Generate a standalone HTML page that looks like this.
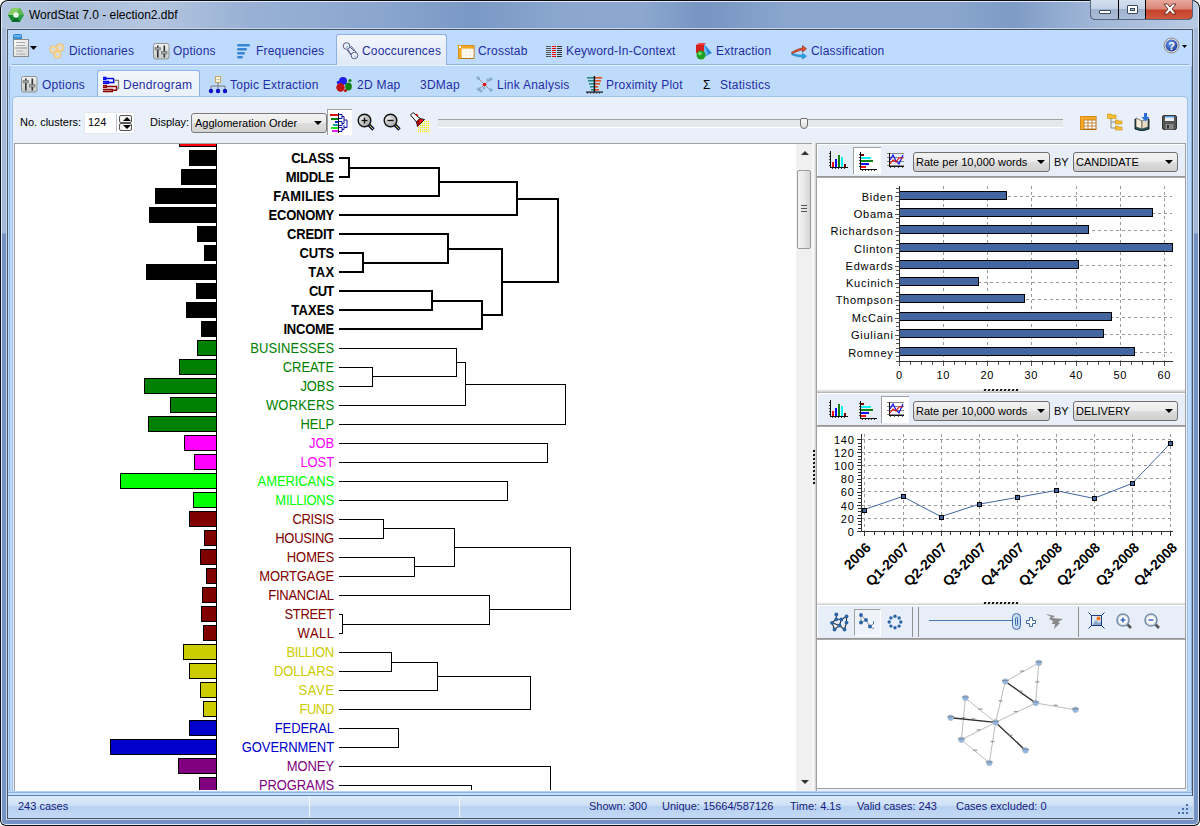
<!DOCTYPE html><html><head><meta charset="utf-8"><style>

*{margin:0;padding:0;box-sizing:border-box}
html,body{width:1200px;height:826px;overflow:hidden;background:#fff;font-family:"Liberation Sans",sans-serif;}
.ab{position:absolute}
.t{position:absolute;white-space:nowrap;line-height:1}

</style></head><body>
<div class="ab" style="left:0;top:0;width:1200px;height:826px;border-radius:8px 8px 6px 6px;background:#0a0e14;"></div>
<div class="ab" style="left:1px;top:1px;width:1198px;height:824px;border-radius:7px 7px 5px 5px;background:#dfe8f4;"></div>
<div class="ab" style="left:2px;top:2px;width:1196px;height:822px;border-radius:6px 6px 4px 4px;background:linear-gradient(180deg,#a6bbd9 0px,#a3b8d7 231px,#7492c1 232px,#7593c2 826px);"></div>
<div class="ab" style="left:2px;top:2px;width:1196px;height:26px;border-radius:6px 6px 0 0;background:linear-gradient(90deg,#b4c6df 0px,#aabedb 60px,#b4c6e0 150px,#98b0d4 250px,#8aa6cf 380px,#7a98c5 470px,#8ba7cf 560px,#8ca8d0 640px,#7794c2 700px,#8ba7cf 790px,#8aa6ce 950px,#7e9bc6 1010px,#9fb6d7 1090px,#bacbe3 1200px);"></div>
<div class="ab" style="left:6px;top:28px;width:1188px;height:792px;background:#c9d5e6;"></div>
<div class="ab" style="left:7px;top:29px;width:1186px;height:790px;background:#44546a;"></div>
<div class="ab" style="left:8px;top:30px;width:1184px;height:788px;background:#bedafc;"></div>
<div class="ab" style="left:8px;top:8px;width:16px;height:15px;"><svg width="16" height="15" viewBox="0 0 16 15"><polygon points="4,0 12,0 16,7 12,14 4,14 0,7" fill="#28a040"/><polygon points="4,0 12,0 8,7 0,7" fill="#88cc68"/><polygon points="12,0 16,7 8,7" fill="#5cb850"/><polygon points="0,7 8,7 4,14" fill="#1a8a34"/><polygon points="8,7 12,14 4,14" fill="#0c6a2a"/><circle cx="8" cy="7" r="2.8" fill="#e8f6e4"/></svg></div>
<div class="t" style="left:29px;top:9px;font-size:12px;color:#000;">WordStat 7.0 - election2.dbf</div>
<div class="ab" style="left:1090px;top:0;width:103px;height:20px;border:1px solid #56667d;border-top:none;border-radius:0 0 5px 5px;overflow:hidden;background:#000">
<div class="ab" style="left:0;top:0;width:27px;height:19px;background:linear-gradient(180deg,#d5e0ee 0%,#c3d2e6 45%,#9fb3cf 50%,#a8bcd8 100%);"></div>
<div class="ab" style="left:28px;top:0;width:26px;height:19px;background:linear-gradient(180deg,#d5e0ee 0%,#c3d2e6 45%,#9fb3cf 50%,#a8bcd8 100%);"></div>
<div class="ab" style="left:55px;top:0;width:47px;height:19px;background:linear-gradient(180deg,#e8a89c 0%,#d9877a 45%,#c4422a 55%,#d0583f 100%);"></div>
<div class="ab" style="left:8px;top:10px;width:12px;height:4px;background:#fff;border:1px solid #3c4a5e;border-radius:1px"></div>
<div class="ab" style="left:36px;top:5px;width:11px;height:9px;background:#fff;border:1px solid #3c4a5e;border-radius:1px"><div class="ab" style="left:2px;top:2px;width:5px;height:3px;background:#a4b8d4;border:1px solid #3c4a5e"></div></div>
<svg class="ab" style="left:72px;top:3px" width="14" height="12" viewBox="0 0 14 12"><path d="M1 1 H4.5 L7 4 L9.5 1 H13 L9 6 L13 11 H9.5 L7 8 L4.5 11 H1 L5 6 Z" fill="#fff" stroke="#5a2a20" stroke-width="0.9"/></svg>
</div>
<div class="ab" style="left:336px;top:34px;width:111px;height:31px;border:1px solid #8db2e3;border-bottom:none;border-radius:3px 3px 0 0;background:linear-gradient(180deg,#f2f6fc 0%,#e7eef8 60%,#dfe8f6 100%);"></div>
<div class="ab" style="left:9px;top:64px;width:1183px;height:732px;border:1px solid #8db2e3;border-radius:4px 4px 0 0;background:#bfdbfc;"></div>
<div class="ab" style="left:337px;top:64px;width:109px;height:2px;background:#e2eaf6;"></div>
<div class="ab" style="left:10px;top:65px;width:1181px;height:1px;background:#e4f0fe;"></div>
<div class="t" style="left:69px;top:45px;font-size:12px;color:#1f2ea4;font-weight:normal;letter-spacing:0.2px">Dictionaries</div>
<div class="t" style="left:173px;top:45px;font-size:12px;color:#1f2ea4;font-weight:normal;letter-spacing:0.2px">Options</div>
<div class="t" style="left:256px;top:45px;font-size:12px;color:#1f2ea4;font-weight:normal;letter-spacing:0.2px">Frequencies</div>
<div class="t" style="left:362px;top:45px;font-size:12px;color:#1f2ea4;font-weight:normal;letter-spacing:0.2px">Cooccurences</div>
<div class="t" style="left:478px;top:45px;font-size:12px;color:#1f2ea4;font-weight:normal;letter-spacing:0.2px">Crosstab</div>
<div class="t" style="left:566px;top:45px;font-size:12px;color:#1f2ea4;font-weight:normal;letter-spacing:0.2px">Keyword-In-Context</div>
<div class="t" style="left:716px;top:45px;font-size:12px;color:#1f2ea4;font-weight:normal;letter-spacing:0.2px">Extraction</div>
<div class="t" style="left:811px;top:45px;font-size:12px;color:#1f2ea4;font-weight:normal;letter-spacing:0.2px">Classification</div>
<div class="ab" style="left:97px;top:70px;width:103px;height:28px;border:1px solid #8db2e3;border-bottom:none;border-radius:3px 3px 0 0;background:linear-gradient(180deg,#f2f6fc 0%,#e9f0f9 100%);"></div>
<div class="t" style="left:42px;top:79px;font-size:12px;color:#1f2ea4;font-weight:normal;letter-spacing:0.25px">Options</div>
<div class="t" style="left:123px;top:79px;font-size:12px;color:#1f2ea4;font-weight:normal;letter-spacing:0.25px">Dendrogram</div>
<div class="t" style="left:230px;top:79px;font-size:12px;color:#1f2ea4;font-weight:normal;letter-spacing:0.25px">Topic Extraction</div>
<div class="t" style="left:357px;top:79px;font-size:12px;color:#1f2ea4;font-weight:normal;letter-spacing:0.25px">2D Map</div>
<div class="t" style="left:420px;top:79px;font-size:12px;color:#1f2ea4;font-weight:normal;letter-spacing:0.25px">3DMap</div>
<div class="t" style="left:497px;top:79px;font-size:12px;color:#1f2ea4;font-weight:normal;letter-spacing:0.25px">Link Analysis</div>
<div class="t" style="left:606px;top:79px;font-size:12px;color:#1f2ea4;font-weight:normal;letter-spacing:0.25px">Proximity Plot</div>
<div class="t" style="left:720px;top:79px;font-size:12px;color:#1f2ea4;font-weight:normal;letter-spacing:0.25px">Statistics</div>
<div class="t" style="left:703px;top:79px;font-size:12px;color:#000;font-weight:normal;">&Sigma;</div>
<div class="ab" style="left:12px;top:96px;width:1176px;height:700px;border:1px solid #9ebfe8;border-radius:4px 4px 0 0;background:#e9f0fa;"></div>
<div class="t" style="left:20px;top:117px;font-size:11px;color:#000;font-weight:normal;">No. clusters:</div>
<div class="ab" style="left:84px;top:112px;width:51px;height:22px;background:#fff;border:1px solid #e2e8f0;"></div>
<div class="t" style="left:88px;top:117px;font-size:11px;color:#000;font-weight:normal;">124</div>
<div class="ab" style="left:116px;top:114px;width:16px;height:18px;border-left:1px solid #b8c0cc;"><div class="ab" style="left:2px;top:1px;width:13px;height:8px;border:1px solid #555;border-radius:2px;background:#f4f4f4"></div><div class="ab" style="left:2px;top:9px;width:13px;height:8px;border:1px solid #555;border-radius:2px;background:#f4f4f4"></div></div>
<div class="t" style="left:150px;top:117px;font-size:11px;color:#000;font-weight:normal;">Display:</div>
<div class="ab" style="left:191px;top:113px;width:136px;height:20px;border:1px solid #7b7b7b;border-radius:3px;background:linear-gradient(180deg,#f3f3f3 0%,#ebebeb 50%,#dddddd 51%,#d3d3d3 100%);"></div>
<div class="t" style="left:195px;top:118px;font-size:11px;color:#000;font-weight:normal;">Agglomeration Order</div>
<div class="ab" style="left:314px;top:121px;width:0;height:0;border-left:4px solid transparent;border-right:4px solid transparent;border-top:4px solid #000;"></div>
<div class="ab" style="left:327px;top:109px;width:25px;height:26px;background:#fff;border-top:1px solid #a0a0a0;border-left:1px solid #a0a0a0;"></div>
<div class="ab" style="left:438px;top:119px;width:625px;height:9px;background:#e5e8ea;border-top:1px solid #a3a3a3;border-bottom:1px solid #fff;"></div>
<div class="ab" style="left:800px;top:118px;width:8px;height:11px;background:linear-gradient(180deg,#fafafa,#dcdcdc);border:1px solid #6e6e6e;border-radius:2px 2px 4px 4px;"></div>
<div class="ab" style="left:14px;top:143px;width:798px;height:648px;background:#fff;border-top:1px solid #a0a0a0;border-left:1px solid #a0a0a0;"></div>
<div class="ab" style="left:796px;top:144px;width:16px;height:647px;background:#f0f0f0;"></div>
<div class="ab" style="left:797px;top:170px;width:14px;height:79px;background:linear-gradient(90deg,#f4f4f4,#e8e8e8 50%,#d4d4d4);border:1px solid #9a9a9a;border-radius:2px;"></div>
<div class="ab" style="left:801px;top:205px;width:6px;height:1px;background:#555"></div><div class="ab" style="left:801px;top:208px;width:6px;height:1px;background:#555"></div><div class="ab" style="left:801px;top:211px;width:6px;height:1px;background:#555"></div>
<div class="ab" style="left:801px;top:151px;width:0;height:0;border-left:4px solid transparent;border-right:4px solid transparent;border-bottom:4px solid #333;"></div>
<div class="ab" style="left:801px;top:780px;width:0;height:0;border-left:4px solid transparent;border-right:4px solid transparent;border-top:4px solid #333;"></div>
<div class="ab" style="left:812px;top:143px;width:5px;height:648px;background:linear-gradient(90deg,#f4f4f4,#f8f8f8 40%,#c8c8c8 80%,#8a8a8a);"></div>
<div class="ab" style="left:813px;top:450px;width:2px;height:2px;background:#000;transform:skewY(-20deg)"></div>
<div class="ab" style="left:813px;top:454px;width:2px;height:2px;background:#000;transform:skewY(-20deg)"></div>
<div class="ab" style="left:813px;top:458px;width:2px;height:2px;background:#000;transform:skewY(-20deg)"></div>
<div class="ab" style="left:813px;top:462px;width:2px;height:2px;background:#000;transform:skewY(-20deg)"></div>
<div class="ab" style="left:813px;top:466px;width:2px;height:2px;background:#000;transform:skewY(-20deg)"></div>
<div class="ab" style="left:813px;top:470px;width:2px;height:2px;background:#000;transform:skewY(-20deg)"></div>
<div class="ab" style="left:813px;top:474px;width:2px;height:2px;background:#000;transform:skewY(-20deg)"></div>
<div class="ab" style="left:813px;top:478px;width:2px;height:2px;background:#000;transform:skewY(-20deg)"></div>
<div class="ab" style="left:813px;top:482px;width:2px;height:2px;background:#000;transform:skewY(-20deg)"></div>
<div class="ab" style="left:8px;top:791px;width:1184px;height:5px;background:linear-gradient(180deg,#b4d0f2 0px,#b4d0f2 1px,#8db4e6 1px,#8db4e6 2px,#c4e0fc 2px,#c4e0fc 4px,#5a82b8 4px);"></div>
<div class="ab" style="left:8px;top:796px;width:1185px;height:22px;background:linear-gradient(180deg,#dce9f9 0%,#d0e2f7 40%,#b7d1f1 50%,#c3d9f4 100%);"></div>
<div class="ab" style="left:309px;top:797px;width:1px;height:20px;background:#f2f7fd"></div>
<div class="ab" style="left:459px;top:797px;width:1px;height:20px;background:#f2f7fd"></div>
<div class="t" style="left:18px;top:801px;font-size:11px;color:#16207c;font-weight:normal;">243 cases</div>
<div class="t" style="left:589px;top:801px;font-size:11px;color:#16207c;font-weight:normal;">Shown: 300</div>
<div class="t" style="left:662px;top:801px;font-size:11px;color:#16207c;font-weight:normal;">Unique: 15664/587126</div>
<div class="t" style="left:790px;top:801px;font-size:11px;color:#16207c;font-weight:normal;">Time: 4.1s</div>
<div class="t" style="left:857px;top:801px;font-size:11px;color:#16207c;font-weight:normal;">Valid cases: 243</div>
<div class="t" style="left:956px;top:801px;font-size:11px;color:#16207c;font-weight:normal;">Cases excluded: 0</div>
<div class="ab" style="left:1186px;top:804px;width:2px;height:2px;background:#4a6fa8"></div>
<div class="ab" style="left:1182px;top:808px;width:2px;height:2px;background:#4a6fa8"></div>
<div class="ab" style="left:1186px;top:808px;width:2px;height:2px;background:#4a6fa8"></div>
<div class="ab" style="left:1178px;top:812px;width:2px;height:2px;background:#4a6fa8"></div>
<div class="ab" style="left:1182px;top:812px;width:2px;height:2px;background:#4a6fa8"></div>
<div class="ab" style="left:1186px;top:812px;width:2px;height:2px;background:#4a6fa8"></div>
<div class="ab" style="left:15px;top:144px;width:781px;height:646px;overflow:hidden;">
<div class="ab" style="left:164px;top:-13px;width:37px;height:16px;background:#ff0000;border:1px solid #000;border-right:none"></div>
<div class="ab" style="left:174px;top:6px;width:27px;height:16px;background:#000000;border:1px solid #000;border-right:none"></div>
<div class="t" style="right:462.00px;top:8px;font-size:13px;letter-spacing:-0.250px;font-weight:bold;color:#000000;transform:scaleY(1.1);transform-origin:50% 76%;">CLASS</div>
<div class="ab" style="left:166px;top:25px;width:35px;height:16px;background:#000000;border:1px solid #000;border-right:none"></div>
<div class="t" style="right:462.00px;top:27px;font-size:13px;letter-spacing:-0.250px;font-weight:bold;color:#000000;transform:scaleY(1.1);transform-origin:50% 76%;">MIDDLE</div>
<div class="ab" style="left:140px;top:44px;width:61px;height:16px;background:#000000;border:1px solid #000;border-right:none"></div>
<div class="t" style="right:461.61px;top:46px;font-size:13px;letter-spacing:0.136px;font-weight:bold;color:#000000;transform:scaleY(1.1);transform-origin:50% 76%;">FAMILIES</div>
<div class="ab" style="left:134px;top:63px;width:67px;height:16px;background:#000000;border:1px solid #000;border-right:none"></div>
<div class="t" style="right:462.00px;top:65px;font-size:13px;letter-spacing:-0.250px;font-weight:bold;color:#000000;transform:scaleY(1.1);transform-origin:50% 76%;">ECONOMY</div>
<div class="ab" style="left:182px;top:82px;width:19px;height:16px;background:#000000;border:1px solid #000;border-right:none"></div>
<div class="t" style="right:462.00px;top:84px;font-size:13px;letter-spacing:-0.250px;font-weight:bold;color:#000000;transform:scaleY(1.1);transform-origin:50% 76%;">CREDIT</div>
<div class="ab" style="left:189px;top:101px;width:12px;height:16px;background:#000000;border:1px solid #000;border-right:none"></div>
<div class="t" style="right:462.00px;top:103px;font-size:13px;letter-spacing:-0.250px;font-weight:bold;color:#000000;transform:scaleY(1.1);transform-origin:50% 76%;">CUTS</div>
<div class="ab" style="left:131px;top:120px;width:70px;height:16px;background:#000000;border:1px solid #000;border-right:none"></div>
<div class="t" style="right:461.20px;top:122px;font-size:13px;letter-spacing:0.550px;font-weight:bold;color:#000000;transform:scaleY(1.1);transform-origin:50% 76%;">TAX</div>
<div class="ab" style="left:181px;top:139px;width:20px;height:16px;background:#000000;border:1px solid #000;border-right:none"></div>
<div class="t" style="right:462.45px;top:141px;font-size:13px;letter-spacing:-0.700px;font-weight:bold;color:#000000;transform:scaleY(1.1);transform-origin:50% 76%;">CUT</div>
<div class="ab" style="left:171px;top:158px;width:30px;height:16px;background:#000000;border:1px solid #000;border-right:none"></div>
<div class="t" style="right:461.60px;top:160px;font-size:13px;letter-spacing:0.150px;font-weight:bold;color:#000000;transform:scaleY(1.1);transform-origin:50% 76%;">TAXES</div>
<div class="ab" style="left:186px;top:177px;width:15px;height:16px;background:#000000;border:1px solid #000;border-right:none"></div>
<div class="t" style="right:462.00px;top:179px;font-size:13px;letter-spacing:-0.250px;font-weight:bold;color:#000000;transform:scaleY(1.1);transform-origin:50% 76%;">INCOME</div>
<div class="ab" style="left:182px;top:196px;width:19px;height:16px;background:#008000;border:1px solid #000;border-right:none"></div>
<div class="t" style="right:461.82px;top:198px;font-size:13px;letter-spacing:0.078px;font-weight:normal;color:#008000;transform:scaleY(1.1);transform-origin:50% 76%;">BUSINESSES</div>
<div class="ab" style="left:164px;top:215px;width:37px;height:16px;background:#008000;border:1px solid #000;border-right:none"></div>
<div class="t" style="right:462.00px;top:217px;font-size:13px;letter-spacing:-0.100px;font-weight:normal;color:#008000;transform:scaleY(1.1);transform-origin:50% 76%;">CREATE</div>
<div class="ab" style="left:129px;top:234px;width:72px;height:16px;background:#008000;border:1px solid #000;border-right:none"></div>
<div class="t" style="right:462.00px;top:236px;font-size:13px;letter-spacing:-0.100px;font-weight:normal;color:#008000;transform:scaleY(1.1);transform-origin:50% 76%;">JOBS</div>
<div class="ab" style="left:155px;top:253px;width:46px;height:16px;background:#008000;border:1px solid #000;border-right:none"></div>
<div class="t" style="right:461.73px;top:255px;font-size:13px;letter-spacing:0.167px;font-weight:normal;color:#008000;transform:scaleY(1.1);transform-origin:50% 76%;">WORKERS</div>
<div class="ab" style="left:133px;top:272px;width:68px;height:16px;background:#008000;border:1px solid #000;border-right:none"></div>
<div class="t" style="right:462.00px;top:274px;font-size:13px;letter-spacing:-0.100px;font-weight:normal;color:#008000;transform:scaleY(1.1);transform-origin:50% 76%;">HELP</div>
<div class="ab" style="left:169px;top:291px;width:32px;height:16px;background:#ff00ff;border:1px solid #000;border-right:none"></div>
<div class="t" style="right:462.00px;top:293px;font-size:13px;letter-spacing:-0.100px;font-weight:normal;color:#ff00ff;transform:scaleY(1.1);transform-origin:50% 76%;">JOB</div>
<div class="ab" style="left:179px;top:310px;width:22px;height:16px;background:#ff00ff;border:1px solid #000;border-right:none"></div>
<div class="t" style="right:462.00px;top:312px;font-size:13px;letter-spacing:-0.100px;font-weight:normal;color:#ff00ff;transform:scaleY(1.1);transform-origin:50% 76%;">LOST</div>
<div class="ab" style="left:105px;top:329px;width:96px;height:16px;background:#00ff00;border:1px solid #000;border-right:none"></div>
<div class="t" style="right:462.00px;top:331px;font-size:13px;letter-spacing:-0.100px;font-weight:normal;color:#00ff00;transform:scaleY(1.1);transform-origin:50% 76%;">AMERICANS</div>
<div class="ab" style="left:178px;top:348px;width:23px;height:16px;background:#00ff00;border:1px solid #000;border-right:none"></div>
<div class="t" style="right:462.17px;top:350px;font-size:13px;letter-spacing:-0.271px;font-weight:normal;color:#00ff00;transform:scaleY(1.1);transform-origin:50% 76%;">MILLIONS</div>
<div class="ab" style="left:174px;top:367px;width:27px;height:16px;background:#800000;border:1px solid #000;border-right:none"></div>
<div class="t" style="right:462.24px;top:369px;font-size:13px;letter-spacing:-0.340px;font-weight:normal;color:#800000;transform:scaleY(1.1);transform-origin:50% 76%;">CRISIS</div>
<div class="ab" style="left:189px;top:386px;width:12px;height:16px;background:#800000;border:1px solid #000;border-right:none"></div>
<div class="t" style="right:462.20px;top:388px;font-size:13px;letter-spacing:-0.300px;font-weight:normal;color:#800000;transform:scaleY(1.1);transform-origin:50% 76%;">HOUSING</div>
<div class="ab" style="left:185px;top:405px;width:16px;height:16px;background:#800000;border:1px solid #000;border-right:none"></div>
<div class="t" style="right:462.00px;top:407px;font-size:13px;letter-spacing:-0.100px;font-weight:normal;color:#800000;transform:scaleY(1.1);transform-origin:50% 76%;">HOMES</div>
<div class="ab" style="left:191px;top:424px;width:10px;height:16px;background:#800000;border:1px solid #000;border-right:none"></div>
<div class="t" style="right:462.00px;top:426px;font-size:13px;letter-spacing:-0.100px;font-weight:normal;color:#800000;transform:scaleY(1.1);transform-origin:50% 76%;">MORTGAGE</div>
<div class="ab" style="left:187px;top:443px;width:14px;height:16px;background:#800000;border:1px solid #000;border-right:none"></div>
<div class="t" style="right:462.15px;top:445px;font-size:13px;letter-spacing:-0.250px;font-weight:normal;color:#800000;transform:scaleY(1.1);transform-origin:50% 76%;">FINANCIAL</div>
<div class="ab" style="left:186px;top:462px;width:15px;height:16px;background:#800000;border:1px solid #000;border-right:none"></div>
<div class="t" style="right:462.22px;top:464px;font-size:13px;letter-spacing:-0.320px;font-weight:normal;color:#800000;transform:scaleY(1.1);transform-origin:50% 76%;">STREET</div>
<div class="ab" style="left:188px;top:481px;width:13px;height:16px;background:#800000;border:1px solid #000;border-right:none"></div>
<div class="t" style="right:461.37px;top:483px;font-size:13px;letter-spacing:0.533px;font-weight:normal;color:#800000;transform:scaleY(1.1);transform-origin:50% 76%;">WALL</div>
<div class="ab" style="left:168px;top:500px;width:33px;height:16px;background:#cccc00;border:1px solid #000;border-right:none"></div>
<div class="t" style="right:462.27px;top:502px;font-size:13px;letter-spacing:-0.367px;font-weight:normal;color:#cccc00;transform:scaleY(1.1);transform-origin:50% 76%;">BILLION</div>
<div class="ab" style="left:174px;top:519px;width:27px;height:16px;background:#cccc00;border:1px solid #000;border-right:none"></div>
<div class="t" style="right:462.00px;top:521px;font-size:13px;letter-spacing:-0.100px;font-weight:normal;color:#cccc00;transform:scaleY(1.1);transform-origin:50% 76%;">DOLLARS</div>
<div class="ab" style="left:185px;top:538px;width:16px;height:16px;background:#cccc00;border:1px solid #000;border-right:none"></div>
<div class="t" style="right:461.23px;top:540px;font-size:13px;letter-spacing:0.667px;font-weight:normal;color:#cccc00;transform:scaleY(1.1);transform-origin:50% 76%;">SAVE</div>
<div class="ab" style="left:188px;top:557px;width:13px;height:16px;background:#cccc00;border:1px solid #000;border-right:none"></div>
<div class="t" style="right:462.40px;top:559px;font-size:13px;letter-spacing:-0.500px;font-weight:normal;color:#cccc00;transform:scaleY(1.1);transform-origin:50% 76%;">FUND</div>
<div class="ab" style="left:174px;top:576px;width:27px;height:16px;background:#0000cc;border:1px solid #000;border-right:none"></div>
<div class="t" style="right:462.00px;top:578px;font-size:13px;letter-spacing:-0.100px;font-weight:normal;color:#0000cc;transform:scaleY(1.1);transform-origin:50% 76%;">FEDERAL</div>
<div class="ab" style="left:95px;top:595px;width:106px;height:16px;background:#0000cc;border:1px solid #000;border-right:none"></div>
<div class="t" style="right:462.00px;top:597px;font-size:13px;letter-spacing:-0.100px;font-weight:normal;color:#0000cc;transform:scaleY(1.1);transform-origin:50% 76%;">GOVERNMENT</div>
<div class="ab" style="left:163px;top:614px;width:38px;height:16px;background:#800080;border:1px solid #000;border-right:none"></div>
<div class="t" style="right:462.00px;top:616px;font-size:13px;letter-spacing:-0.100px;font-weight:normal;color:#800080;transform:scaleY(1.1);transform-origin:50% 76%;">MONEY</div>
<div class="ab" style="left:184px;top:633px;width:17px;height:16px;background:#800080;border:1px solid #000;border-right:none"></div>
<div class="t" style="right:462.00px;top:635px;font-size:13px;letter-spacing:-0.100px;font-weight:normal;color:#800080;transform:scaleY(1.1);transform-origin:50% 76%;">PROGRAMS</div>
<div class="ab" style="left:201px;top:0;width:1px;height:646px;background:#000"></div>
<svg class="ab" style="left:0;top:0" width="781" height="646" shape-rendering="crispEdges"><rect x="324" y="223" width="34" height="1" fill="#000"/><rect x="324" y="242" width="34" height="1" fill="#000"/><rect x="357" y="223" width="1" height="20" fill="#000"/><rect x="324" y="204" width="118" height="1" fill="#000"/><rect x="357" y="232" width="85" height="1" fill="#000"/><rect x="441" y="204" width="1" height="29" fill="#000"/><rect x="441" y="218" width="10" height="1" fill="#000"/><rect x="324" y="261" width="127" height="1" fill="#000"/><rect x="450" y="218" width="1" height="44" fill="#000"/><rect x="450" y="240" width="101" height="1" fill="#000"/><rect x="324" y="280" width="227" height="1" fill="#000"/><rect x="550" y="240" width="1" height="41" fill="#000"/><rect x="324" y="299" width="209" height="1" fill="#000"/><rect x="324" y="318" width="209" height="1" fill="#000"/><rect x="532" y="299" width="1" height="20" fill="#000"/><rect x="324" y="337" width="169" height="1" fill="#000"/><rect x="324" y="356" width="169" height="1" fill="#000"/><rect x="492" y="337" width="1" height="20" fill="#000"/><rect x="324" y="375" width="45" height="1" fill="#000"/><rect x="324" y="394" width="45" height="1" fill="#000"/><rect x="368" y="375" width="1" height="20" fill="#000"/><rect x="324" y="413" width="76" height="1" fill="#000"/><rect x="324" y="432" width="76" height="1" fill="#000"/><rect x="399" y="413" width="1" height="20" fill="#000"/><rect x="368" y="384" width="72" height="1" fill="#000"/><rect x="399" y="422" width="41" height="1" fill="#000"/><rect x="439" y="384" width="1" height="39" fill="#000"/><rect x="324" y="470" width="4" height="1" fill="#000"/><rect x="324" y="489" width="4" height="1" fill="#000"/><rect x="327" y="470" width="1" height="20" fill="#000"/><rect x="324" y="451" width="151" height="1" fill="#000"/><rect x="327" y="480" width="148" height="1" fill="#000"/><rect x="474" y="451" width="1" height="30" fill="#000"/><rect x="439" y="403" width="117" height="1" fill="#000"/><rect x="474" y="465" width="82" height="1" fill="#000"/><rect x="555" y="403" width="1" height="63" fill="#000"/><rect x="324" y="508" width="53" height="1" fill="#000"/><rect x="324" y="527" width="53" height="1" fill="#000"/><rect x="376" y="508" width="1" height="20" fill="#000"/><rect x="376" y="518" width="47" height="1" fill="#000"/><rect x="324" y="546" width="99" height="1" fill="#000"/><rect x="422" y="518" width="1" height="29" fill="#000"/><rect x="422" y="532" width="94" height="1" fill="#000"/><rect x="324" y="565" width="192" height="1" fill="#000"/><rect x="515" y="532" width="1" height="34" fill="#000"/><rect x="324" y="584" width="60" height="1" fill="#000"/><rect x="324" y="603" width="60" height="1" fill="#000"/><rect x="383" y="584" width="1" height="20" fill="#000"/><rect x="324" y="622" width="212" height="1" fill="#000"/><rect x="535" y="622" width="1" height="35" fill="#000"/><rect x="324" y="641" width="133" height="1" fill="#000"/><rect x="456" y="641" width="1" height="16" fill="#000"/><rect x="324" y="13" width="11" height="2" fill="#000"/><rect x="324" y="32" width="11" height="2" fill="#000"/><rect x="333" y="13" width="2" height="21" fill="#000"/><rect x="333" y="23" width="92" height="2" fill="#000"/><rect x="324" y="51" width="101" height="2" fill="#000"/><rect x="423" y="23" width="2" height="30" fill="#000"/><rect x="423" y="37" width="80" height="2" fill="#000"/><rect x="324" y="70" width="179" height="2" fill="#000"/><rect x="501" y="37" width="2" height="35" fill="#000"/><rect x="324" y="108" width="25" height="2" fill="#000"/><rect x="324" y="127" width="25" height="2" fill="#000"/><rect x="347" y="108" width="2" height="21" fill="#000"/><rect x="324" y="89" width="110" height="2" fill="#000"/><rect x="347" y="118" width="87" height="2" fill="#000"/><rect x="432" y="89" width="2" height="31" fill="#000"/><rect x="324" y="146" width="94" height="2" fill="#000"/><rect x="324" y="165" width="94" height="2" fill="#000"/><rect x="416" y="146" width="2" height="21" fill="#000"/><rect x="416" y="156" width="52" height="2" fill="#000"/><rect x="324" y="184" width="144" height="2" fill="#000"/><rect x="466" y="156" width="2" height="30" fill="#000"/><rect x="432" y="104" width="56" height="2" fill="#000"/><rect x="466" y="170" width="22" height="2" fill="#000"/><rect x="486" y="104" width="2" height="68" fill="#000"/><rect x="501" y="54" width="43" height="2" fill="#000"/><rect x="486" y="137" width="58" height="2" fill="#000"/><rect x="542" y="54" width="2" height="85" fill="#000"/></svg>
</div>
<div class="ab" style="left:816px;top:143px;width:370px;height:646px;border:1px solid #a0a0a0;background:#fff;"></div>
<div class="ab" style="left:817px;top:144px;width:368px;height:32px;background:#e8eef8;border-top:1px solid #fff;border-left:1px solid #fff"></div>
<div class="ab" style="left:817px;top:176px;width:368px;height:2px;background:linear-gradient(180deg,#8c8c8c,#b4b4b4);"></div>
<div class="ab" style="left:817px;top:389px;width:368px;height:4px;background:linear-gradient(180deg,#fbfbfb,#e0e0e0 50%,#a8a8a8);"></div>
<div class="ab" style="left:984px;top:389px;width:2px;height:2px;background:#000;transform:skewX(-20deg)"></div>
<div class="ab" style="left:988px;top:389px;width:2px;height:2px;background:#000;transform:skewX(-20deg)"></div>
<div class="ab" style="left:992px;top:389px;width:2px;height:2px;background:#000;transform:skewX(-20deg)"></div>
<div class="ab" style="left:996px;top:389px;width:2px;height:2px;background:#000;transform:skewX(-20deg)"></div>
<div class="ab" style="left:1000px;top:389px;width:2px;height:2px;background:#000;transform:skewX(-20deg)"></div>
<div class="ab" style="left:1004px;top:389px;width:2px;height:2px;background:#000;transform:skewX(-20deg)"></div>
<div class="ab" style="left:1008px;top:389px;width:2px;height:2px;background:#000;transform:skewX(-20deg)"></div>
<div class="ab" style="left:1012px;top:389px;width:2px;height:2px;background:#000;transform:skewX(-20deg)"></div>
<div class="ab" style="left:1016px;top:389px;width:2px;height:2px;background:#000;transform:skewX(-20deg)"></div>
<div class="ab" style="left:817px;top:393px;width:368px;height:32px;background:#e8eef8;border-top:1px solid #fff;border-left:1px solid #fff"></div>
<div class="ab" style="left:817px;top:425px;width:368px;height:2px;background:linear-gradient(180deg,#8c8c8c,#b4b4b4);"></div>
<div class="ab" style="left:817px;top:602px;width:368px;height:4px;background:linear-gradient(180deg,#fbfbfb,#e0e0e0 50%,#a8a8a8);"></div>
<div class="ab" style="left:984px;top:602px;width:2px;height:2px;background:#000;transform:skewX(-20deg)"></div>
<div class="ab" style="left:988px;top:602px;width:2px;height:2px;background:#000;transform:skewX(-20deg)"></div>
<div class="ab" style="left:992px;top:602px;width:2px;height:2px;background:#000;transform:skewX(-20deg)"></div>
<div class="ab" style="left:996px;top:602px;width:2px;height:2px;background:#000;transform:skewX(-20deg)"></div>
<div class="ab" style="left:1000px;top:602px;width:2px;height:2px;background:#000;transform:skewX(-20deg)"></div>
<div class="ab" style="left:1004px;top:602px;width:2px;height:2px;background:#000;transform:skewX(-20deg)"></div>
<div class="ab" style="left:1008px;top:602px;width:2px;height:2px;background:#000;transform:skewX(-20deg)"></div>
<div class="ab" style="left:1012px;top:602px;width:2px;height:2px;background:#000;transform:skewX(-20deg)"></div>
<div class="ab" style="left:1016px;top:602px;width:2px;height:2px;background:#000;transform:skewX(-20deg)"></div>
<div class="ab" style="left:817px;top:605px;width:368px;height:33px;background:#e8eef8;border-top:1px solid #fff;border-left:1px solid #fff"></div>
<div class="ab" style="left:817px;top:638px;width:368px;height:2px;background:linear-gradient(180deg,#8c8c8c,#b4b4b4);"></div>
<div class="ab" style="left:913px;top:152px;width:137px;height:20px;border:1px solid #707070;border-radius:3px;background:linear-gradient(180deg,#f2f2f2 0%,#ebebeb 50%,#dddddd 51%,#cfcfcf 100%);"></div>
<div class="t" style="left:916px;top:157px;font-size:11px;color:#000;font-weight:normal;">Rate per 10,000 words</div>
<div class="ab" style="left:1037px;top:160px;width:0;height:0;border-left:4px solid transparent;border-right:4px solid transparent;border-top:4px solid #000;"></div>
<div class="t" style="left:1054px;top:157px;font-size:11px;color:#000;font-weight:normal;">BY</div>
<div class="ab" style="left:1073px;top:152px;width:105px;height:20px;border:1px solid #707070;border-radius:3px;background:linear-gradient(180deg,#f2f2f2 0%,#ebebeb 50%,#dddddd 51%,#cfcfcf 100%);"></div>
<div class="t" style="left:1076px;top:157px;font-size:11px;color:#000;font-weight:normal;">CANDIDATE</div>
<div class="ab" style="left:1165px;top:160px;width:0;height:0;border-left:4px solid transparent;border-right:4px solid transparent;border-top:4px solid #000;"></div>
<div class="ab" style="left:913px;top:401px;width:137px;height:20px;border:1px solid #707070;border-radius:3px;background:linear-gradient(180deg,#f2f2f2 0%,#ebebeb 50%,#dddddd 51%,#cfcfcf 100%);"></div>
<div class="t" style="left:916px;top:406px;font-size:11px;color:#000;font-weight:normal;">Rate per 10,000 words</div>
<div class="ab" style="left:1037px;top:409px;width:0;height:0;border-left:4px solid transparent;border-right:4px solid transparent;border-top:4px solid #000;"></div>
<div class="t" style="left:1054px;top:406px;font-size:11px;color:#000;font-weight:normal;">BY</div>
<div class="ab" style="left:1073px;top:401px;width:105px;height:20px;border:1px solid #707070;border-radius:3px;background:linear-gradient(180deg,#f2f2f2 0%,#ebebeb 50%,#dddddd 51%,#cfcfcf 100%);"></div>
<div class="t" style="left:1076px;top:406px;font-size:11px;color:#000;font-weight:normal;">DELIVERY</div>
<div class="ab" style="left:1165px;top:409px;width:0;height:0;border-left:4px solid transparent;border-right:4px solid transparent;border-top:4px solid #000;"></div>
<div class="ab" style="left:853px;top:147px;width:28px;height:27px;background:#fff;border-top:1px solid #a0a0a0;border-left:1px solid #a0a0a0"></div>
<div class="ab" style="left:881px;top:396px;width:28px;height:27px;background:#fff;border-top:1px solid #a0a0a0;border-left:1px solid #a0a0a0"></div>
<div class="ab" style="left:854px;top:609px;width:27px;height:27px;background:#eef3fa;border-top:1px solid #a0a0a0;border-left:1px solid #a0a0a0;border-right:1px solid #fff;border-bottom:1px solid #fff"></div>
<svg class="ab" style="left:0;top:0" width="1200" height="826" shape-rendering="crispEdges"><line x1="943.5" y1="186" x2="943.5" y2="361" stroke="#9a9a9a" stroke-width="1" stroke-dasharray="3,3"/><line x1="987.5" y1="186" x2="987.5" y2="361" stroke="#9a9a9a" stroke-width="1" stroke-dasharray="3,3"/><line x1="1031.5" y1="186" x2="1031.5" y2="361" stroke="#9a9a9a" stroke-width="1" stroke-dasharray="3,3"/><line x1="1076.5" y1="186" x2="1076.5" y2="361" stroke="#9a9a9a" stroke-width="1" stroke-dasharray="3,3"/><line x1="1120.5" y1="186" x2="1120.5" y2="361" stroke="#9a9a9a" stroke-width="1" stroke-dasharray="3,3"/><line x1="1164.5" y1="186" x2="1164.5" y2="361" stroke="#9a9a9a" stroke-width="1" stroke-dasharray="3,3"/><line x1="900" y1="196.5" x2="1172" y2="196.5" stroke="#9a9a9a" stroke-dasharray="3,3"/><line x1="900" y1="213.5" x2="1172" y2="213.5" stroke="#9a9a9a" stroke-dasharray="3,3"/><line x1="900" y1="230.5" x2="1172" y2="230.5" stroke="#9a9a9a" stroke-dasharray="3,3"/><line x1="900" y1="248.5" x2="1172" y2="248.5" stroke="#9a9a9a" stroke-dasharray="3,3"/><line x1="900" y1="265.5" x2="1172" y2="265.5" stroke="#9a9a9a" stroke-dasharray="3,3"/><line x1="900" y1="282.5" x2="1172" y2="282.5" stroke="#9a9a9a" stroke-dasharray="3,3"/><line x1="900" y1="299.5" x2="1172" y2="299.5" stroke="#9a9a9a" stroke-dasharray="3,3"/><line x1="900" y1="317.5" x2="1172" y2="317.5" stroke="#9a9a9a" stroke-dasharray="3,3"/><line x1="900" y1="334.5" x2="1172" y2="334.5" stroke="#9a9a9a" stroke-dasharray="3,3"/><line x1="900" y1="352.5" x2="1172" y2="352.5" stroke="#9a9a9a" stroke-dasharray="3,3"/><rect x="899.5" y="191.5" width="107" height="8" fill="#4466a0" stroke="#000" stroke-width="1"/><rect x="899.5" y="208.5" width="253" height="8" fill="#4466a0" stroke="#000" stroke-width="1"/><rect x="899.5" y="225.5" width="189" height="8" fill="#4466a0" stroke="#000" stroke-width="1"/><rect x="899.5" y="243.5" width="273" height="8" fill="#4466a0" stroke="#000" stroke-width="1"/><rect x="899.5" y="260.5" width="179" height="8" fill="#4466a0" stroke="#000" stroke-width="1"/><rect x="899.5" y="277.5" width="79" height="8" fill="#4466a0" stroke="#000" stroke-width="1"/><rect x="899.5" y="294.5" width="125" height="8" fill="#4466a0" stroke="#000" stroke-width="1"/><rect x="899.5" y="312.5" width="212" height="8" fill="#4466a0" stroke="#000" stroke-width="1"/><rect x="899.5" y="329.5" width="204" height="8" fill="#4466a0" stroke="#000" stroke-width="1"/><rect x="899.5" y="347.5" width="235" height="8" fill="#4466a0" stroke="#000" stroke-width="1"/><rect x="899" y="186" width="1" height="176" fill="#333"/><rect x="899" y="361" width="274" height="1" fill="#333"/><rect x="896" y="188" width="3" height="1" fill="#555"/><rect x="896" y="192" width="3" height="1" fill="#555"/><rect x="895" y="196" width="4" height="1" fill="#555"/><rect x="896" y="201" width="3" height="1" fill="#555"/><rect x="896" y="205" width="3" height="1" fill="#555"/><rect x="896" y="209" width="3" height="1" fill="#555"/><rect x="895" y="214" width="4" height="1" fill="#555"/><rect x="896" y="218" width="3" height="1" fill="#555"/><rect x="896" y="222" width="3" height="1" fill="#555"/><rect x="896" y="227" width="3" height="1" fill="#555"/><rect x="895" y="231" width="4" height="1" fill="#555"/><rect x="896" y="235" width="3" height="1" fill="#555"/><rect x="896" y="240" width="3" height="1" fill="#555"/><rect x="896" y="244" width="3" height="1" fill="#555"/><rect x="895" y="248" width="4" height="1" fill="#555"/><rect x="896" y="253" width="3" height="1" fill="#555"/><rect x="896" y="257" width="3" height="1" fill="#555"/><rect x="896" y="261" width="3" height="1" fill="#555"/><rect x="895" y="266" width="4" height="1" fill="#555"/><rect x="896" y="270" width="3" height="1" fill="#555"/><rect x="896" y="274" width="3" height="1" fill="#555"/><rect x="896" y="279" width="3" height="1" fill="#555"/><rect x="895" y="283" width="4" height="1" fill="#555"/><rect x="896" y="287" width="3" height="1" fill="#555"/><rect x="896" y="292" width="3" height="1" fill="#555"/><rect x="896" y="296" width="3" height="1" fill="#555"/><rect x="895" y="300" width="4" height="1" fill="#555"/><rect x="896" y="305" width="3" height="1" fill="#555"/><rect x="896" y="309" width="3" height="1" fill="#555"/><rect x="896" y="313" width="3" height="1" fill="#555"/><rect x="895" y="318" width="4" height="1" fill="#555"/><rect x="896" y="322" width="3" height="1" fill="#555"/><rect x="896" y="326" width="3" height="1" fill="#555"/><rect x="896" y="330" width="3" height="1" fill="#555"/><rect x="895" y="335" width="4" height="1" fill="#555"/><rect x="896" y="339" width="3" height="1" fill="#555"/><rect x="896" y="343" width="3" height="1" fill="#555"/><rect x="896" y="348" width="3" height="1" fill="#555"/><rect x="895" y="352" width="4" height="1" fill="#555"/><rect x="896" y="356" width="3" height="1" fill="#555"/><rect x="896" y="361" width="3" height="1" fill="#555"/><rect x="899" y="362" width="1" height="4" fill="#555"/><rect x="910" y="362" width="1" height="3" fill="#555"/><rect x="921" y="362" width="1" height="3" fill="#555"/><rect x="932" y="362" width="1" height="3" fill="#555"/><rect x="943" y="362" width="1" height="4" fill="#555"/><rect x="954" y="362" width="1" height="3" fill="#555"/><rect x="965" y="362" width="1" height="3" fill="#555"/><rect x="976" y="362" width="1" height="3" fill="#555"/><rect x="987" y="362" width="1" height="4" fill="#555"/><rect x="998" y="362" width="1" height="3" fill="#555"/><rect x="1009" y="362" width="1" height="3" fill="#555"/><rect x="1020" y="362" width="1" height="3" fill="#555"/><rect x="1031" y="362" width="1" height="4" fill="#555"/><rect x="1042" y="362" width="1" height="3" fill="#555"/><rect x="1054" y="362" width="1" height="3" fill="#555"/><rect x="1065" y="362" width="1" height="3" fill="#555"/><rect x="1076" y="362" width="1" height="4" fill="#555"/><rect x="1087" y="362" width="1" height="3" fill="#555"/><rect x="1098" y="362" width="1" height="3" fill="#555"/><rect x="1109" y="362" width="1" height="3" fill="#555"/><rect x="1120" y="362" width="1" height="4" fill="#555"/><rect x="1131" y="362" width="1" height="3" fill="#555"/><rect x="1142" y="362" width="1" height="3" fill="#555"/><rect x="1153" y="362" width="1" height="3" fill="#555"/><rect x="1164" y="362" width="1" height="4" fill="#555"/></svg>
<div class="t" style="right:306.4px;top:192px;font-size:11px;letter-spacing:0.75px;color:#000;">Biden</div>
<div class="t" style="right:306.4px;top:209px;font-size:11px;letter-spacing:0.75px;color:#000;">Obama</div>
<div class="t" style="right:306.4px;top:226px;font-size:11px;letter-spacing:0.75px;color:#000;">Richardson</div>
<div class="t" style="right:306.4px;top:244px;font-size:11px;letter-spacing:0.75px;color:#000;">Clinton</div>
<div class="t" style="right:306.4px;top:261px;font-size:11px;letter-spacing:0.75px;color:#000;">Edwards</div>
<div class="t" style="right:306.4px;top:278px;font-size:11px;letter-spacing:0.75px;color:#000;">Kucinich</div>
<div class="t" style="right:306.4px;top:295px;font-size:11px;letter-spacing:0.75px;color:#000;">Thompson</div>
<div class="t" style="right:306.4px;top:313px;font-size:11px;letter-spacing:0.75px;color:#000;">McCain</div>
<div class="t" style="right:306.4px;top:330px;font-size:11px;letter-spacing:0.75px;color:#000;">Giuliani</div>
<div class="t" style="right:306.4px;top:348px;font-size:11px;letter-spacing:0.75px;color:#000;">Romney</div>
<div class="t" style="left:869px;width:60px;text-align:center;top:370px;font-size:11px;letter-spacing:0.6px;text-indent:0.6px;color:#000;">0</div>
<div class="t" style="left:913px;width:60px;text-align:center;top:370px;font-size:11px;letter-spacing:0.6px;text-indent:0.6px;color:#000;">10</div>
<div class="t" style="left:957px;width:60px;text-align:center;top:370px;font-size:11px;letter-spacing:0.6px;text-indent:0.6px;color:#000;">20</div>
<div class="t" style="left:1001px;width:60px;text-align:center;top:370px;font-size:11px;letter-spacing:0.6px;text-indent:0.6px;color:#000;">30</div>
<div class="t" style="left:1046px;width:60px;text-align:center;top:370px;font-size:11px;letter-spacing:0.6px;text-indent:0.6px;color:#000;">40</div>
<div class="t" style="left:1090px;width:60px;text-align:center;top:370px;font-size:11px;letter-spacing:0.6px;text-indent:0.6px;color:#000;">50</div>
<div class="t" style="left:1134px;width:60px;text-align:center;top:370px;font-size:11px;letter-spacing:0.6px;text-indent:0.6px;color:#000;">60</div>
<svg class="ab" style="left:0;top:0" width="1200" height="826"><line x1="864.5" y1="434" x2="864.5" y2="531" stroke="#9a9a9a" stroke-dasharray="3,3" shape-rendering="crispEdges"/><line x1="903.5" y1="434" x2="903.5" y2="531" stroke="#9a9a9a" stroke-dasharray="3,3" shape-rendering="crispEdges"/><line x1="941.5" y1="434" x2="941.5" y2="531" stroke="#9a9a9a" stroke-dasharray="3,3" shape-rendering="crispEdges"/><line x1="979.5" y1="434" x2="979.5" y2="531" stroke="#9a9a9a" stroke-dasharray="3,3" shape-rendering="crispEdges"/><line x1="1017.5" y1="434" x2="1017.5" y2="531" stroke="#9a9a9a" stroke-dasharray="3,3" shape-rendering="crispEdges"/><line x1="1056.5" y1="434" x2="1056.5" y2="531" stroke="#9a9a9a" stroke-dasharray="3,3" shape-rendering="crispEdges"/><line x1="1094.5" y1="434" x2="1094.5" y2="531" stroke="#9a9a9a" stroke-dasharray="3,3" shape-rendering="crispEdges"/><line x1="1132.5" y1="434" x2="1132.5" y2="531" stroke="#9a9a9a" stroke-dasharray="3,3" shape-rendering="crispEdges"/><line x1="1170.5" y1="434" x2="1170.5" y2="531" stroke="#9a9a9a" stroke-dasharray="3,3" shape-rendering="crispEdges"/><line x1="862" y1="518.5" x2="1172" y2="518.5" stroke="#9a9a9a" stroke-dasharray="3,3" shape-rendering="crispEdges"/><line x1="862" y1="505.5" x2="1172" y2="505.5" stroke="#9a9a9a" stroke-dasharray="3,3" shape-rendering="crispEdges"/><line x1="862" y1="491.5" x2="1172" y2="491.5" stroke="#9a9a9a" stroke-dasharray="3,3" shape-rendering="crispEdges"/><line x1="862" y1="478.5" x2="1172" y2="478.5" stroke="#9a9a9a" stroke-dasharray="3,3" shape-rendering="crispEdges"/><line x1="862" y1="465.5" x2="1172" y2="465.5" stroke="#9a9a9a" stroke-dasharray="3,3" shape-rendering="crispEdges"/><line x1="862" y1="452.5" x2="1172" y2="452.5" stroke="#9a9a9a" stroke-dasharray="3,3" shape-rendering="crispEdges"/><line x1="862" y1="439.5" x2="1172" y2="439.5" stroke="#9a9a9a" stroke-dasharray="3,3" shape-rendering="crispEdges"/><rect x="861" y="434" width="1" height="98" fill="#333" shape-rendering="crispEdges"/><rect x="861" y="531" width="312" height="1" fill="#333" shape-rendering="crispEdges"/><rect x="857" y="531" width="4" height="1" fill="#333" shape-rendering="crispEdges"/><rect x="858" y="528" width="3" height="1" fill="#333" shape-rendering="crispEdges"/><rect x="858" y="524" width="3" height="1" fill="#333" shape-rendering="crispEdges"/><rect x="858" y="521" width="3" height="1" fill="#333" shape-rendering="crispEdges"/><rect x="857" y="518" width="4" height="1" fill="#333" shape-rendering="crispEdges"/><rect x="858" y="515" width="3" height="1" fill="#333" shape-rendering="crispEdges"/><rect x="858" y="511" width="3" height="1" fill="#333" shape-rendering="crispEdges"/><rect x="858" y="508" width="3" height="1" fill="#333" shape-rendering="crispEdges"/><rect x="857" y="505" width="4" height="1" fill="#333" shape-rendering="crispEdges"/><rect x="858" y="502" width="3" height="1" fill="#333" shape-rendering="crispEdges"/><rect x="858" y="498" width="3" height="1" fill="#333" shape-rendering="crispEdges"/><rect x="858" y="495" width="3" height="1" fill="#333" shape-rendering="crispEdges"/><rect x="857" y="492" width="4" height="1" fill="#333" shape-rendering="crispEdges"/><rect x="858" y="488" width="3" height="1" fill="#333" shape-rendering="crispEdges"/><rect x="858" y="485" width="3" height="1" fill="#333" shape-rendering="crispEdges"/><rect x="858" y="482" width="3" height="1" fill="#333" shape-rendering="crispEdges"/><rect x="857" y="479" width="4" height="1" fill="#333" shape-rendering="crispEdges"/><rect x="858" y="475" width="3" height="1" fill="#333" shape-rendering="crispEdges"/><rect x="858" y="472" width="3" height="1" fill="#333" shape-rendering="crispEdges"/><rect x="858" y="469" width="3" height="1" fill="#333" shape-rendering="crispEdges"/><rect x="857" y="465" width="4" height="1" fill="#333" shape-rendering="crispEdges"/><rect x="858" y="462" width="3" height="1" fill="#333" shape-rendering="crispEdges"/><rect x="858" y="459" width="3" height="1" fill="#333" shape-rendering="crispEdges"/><rect x="858" y="456" width="3" height="1" fill="#333" shape-rendering="crispEdges"/><rect x="857" y="452" width="4" height="1" fill="#333" shape-rendering="crispEdges"/><rect x="858" y="449" width="3" height="1" fill="#333" shape-rendering="crispEdges"/><rect x="858" y="446" width="3" height="1" fill="#333" shape-rendering="crispEdges"/><rect x="858" y="443" width="3" height="1" fill="#333" shape-rendering="crispEdges"/><rect x="857" y="439" width="4" height="1" fill="#333" shape-rendering="crispEdges"/><rect x="864" y="532" width="1" height="4" fill="#333" shape-rendering="crispEdges"/><rect x="874" y="532" width="1" height="3" fill="#333" shape-rendering="crispEdges"/><rect x="884" y="532" width="1" height="3" fill="#333" shape-rendering="crispEdges"/><rect x="893" y="532" width="1" height="3" fill="#333" shape-rendering="crispEdges"/><rect x="903" y="532" width="1" height="4" fill="#333" shape-rendering="crispEdges"/><rect x="912" y="532" width="1" height="3" fill="#333" shape-rendering="crispEdges"/><rect x="922" y="532" width="1" height="3" fill="#333" shape-rendering="crispEdges"/><rect x="931" y="532" width="1" height="3" fill="#333" shape-rendering="crispEdges"/><rect x="941" y="532" width="1" height="4" fill="#333" shape-rendering="crispEdges"/><rect x="950" y="532" width="1" height="3" fill="#333" shape-rendering="crispEdges"/><rect x="960" y="532" width="1" height="3" fill="#333" shape-rendering="crispEdges"/><rect x="970" y="532" width="1" height="3" fill="#333" shape-rendering="crispEdges"/><rect x="979" y="532" width="1" height="4" fill="#333" shape-rendering="crispEdges"/><rect x="989" y="532" width="1" height="3" fill="#333" shape-rendering="crispEdges"/><rect x="998" y="532" width="1" height="3" fill="#333" shape-rendering="crispEdges"/><rect x="1008" y="532" width="1" height="3" fill="#333" shape-rendering="crispEdges"/><rect x="1017" y="532" width="1" height="4" fill="#333" shape-rendering="crispEdges"/><rect x="1027" y="532" width="1" height="3" fill="#333" shape-rendering="crispEdges"/><rect x="1037" y="532" width="1" height="3" fill="#333" shape-rendering="crispEdges"/><rect x="1046" y="532" width="1" height="3" fill="#333" shape-rendering="crispEdges"/><rect x="1056" y="532" width="1" height="4" fill="#333" shape-rendering="crispEdges"/><rect x="1065" y="532" width="1" height="3" fill="#333" shape-rendering="crispEdges"/><rect x="1075" y="532" width="1" height="3" fill="#333" shape-rendering="crispEdges"/><rect x="1084" y="532" width="1" height="3" fill="#333" shape-rendering="crispEdges"/><rect x="1094" y="532" width="1" height="4" fill="#333" shape-rendering="crispEdges"/><rect x="1103" y="532" width="1" height="3" fill="#333" shape-rendering="crispEdges"/><rect x="1113" y="532" width="1" height="3" fill="#333" shape-rendering="crispEdges"/><rect x="1123" y="532" width="1" height="3" fill="#333" shape-rendering="crispEdges"/><rect x="1132" y="532" width="1" height="4" fill="#333" shape-rendering="crispEdges"/><rect x="1142" y="532" width="1" height="3" fill="#333" shape-rendering="crispEdges"/><rect x="1151" y="532" width="1" height="3" fill="#333" shape-rendering="crispEdges"/><rect x="1161" y="532" width="1" height="3" fill="#333" shape-rendering="crispEdges"/><rect x="1170" y="532" width="1" height="4" fill="#333" shape-rendering="crispEdges"/><polyline points="864.4,509.5 902.6,496.5 940.9,516.6 979.1,504.2 1017.4,497.4 1055.7,490.5 1093.9,498.4 1132.2,483.4 1170.4,443.4" fill="none" stroke="#4466a0" stroke-width="1"/><rect x="862.5" y="508.5" width="4" height="4" fill="#4466a0" stroke="#000" stroke-width="1" shape-rendering="crispEdges"/><rect x="901.5" y="494.5" width="4" height="4" fill="#4466a0" stroke="#000" stroke-width="1" shape-rendering="crispEdges"/><rect x="939.5" y="515.5" width="4" height="4" fill="#4466a0" stroke="#000" stroke-width="1" shape-rendering="crispEdges"/><rect x="977.5" y="502.5" width="4" height="4" fill="#4466a0" stroke="#000" stroke-width="1" shape-rendering="crispEdges"/><rect x="1015.5" y="495.5" width="4" height="4" fill="#4466a0" stroke="#000" stroke-width="1" shape-rendering="crispEdges"/><rect x="1054.5" y="488.5" width="4" height="4" fill="#4466a0" stroke="#000" stroke-width="1" shape-rendering="crispEdges"/><rect x="1092.5" y="496.5" width="4" height="4" fill="#4466a0" stroke="#000" stroke-width="1" shape-rendering="crispEdges"/><rect x="1130.5" y="481.5" width="4" height="4" fill="#4466a0" stroke="#000" stroke-width="1" shape-rendering="crispEdges"/><rect x="1168.5" y="441.5" width="4" height="4" fill="#4466a0" stroke="#000" stroke-width="1" shape-rendering="crispEdges"/></svg>
<div class="t" style="right:345.4px;top:527px;font-size:11px;letter-spacing:0.75px;color:#000;">0</div>
<div class="t" style="right:345.4px;top:514px;font-size:11px;letter-spacing:0.75px;color:#000;">20</div>
<div class="t" style="right:345.4px;top:501px;font-size:11px;letter-spacing:0.75px;color:#000;">40</div>
<div class="t" style="right:345.4px;top:487px;font-size:11px;letter-spacing:0.75px;color:#000;">60</div>
<div class="t" style="right:345.4px;top:474px;font-size:11px;letter-spacing:0.75px;color:#000;">80</div>
<div class="t" style="right:345.4px;top:461px;font-size:11px;letter-spacing:0.75px;color:#000;">100</div>
<div class="t" style="right:345.4px;top:448px;font-size:11px;letter-spacing:0.75px;color:#000;">120</div>
<div class="t" style="right:345.4px;top:435px;font-size:11px;letter-spacing:0.75px;color:#000;">140</div>
<div class="t" style="right:331.6px;top:538px;font-size:14px;font-weight:bold;color:#000;transform-origin:100% 50%;transform:rotate(-45deg);">2006</div>
<div class="t" style="right:293.4px;top:538px;font-size:14px;font-weight:bold;color:#000;transform-origin:100% 50%;transform:rotate(-45deg);">Q1-2007</div>
<div class="t" style="right:255.1px;top:538px;font-size:14px;font-weight:bold;color:#000;transform-origin:100% 50%;transform:rotate(-45deg);">Q2-2007</div>
<div class="t" style="right:216.9px;top:538px;font-size:14px;font-weight:bold;color:#000;transform-origin:100% 50%;transform:rotate(-45deg);">Q3-2007</div>
<div class="t" style="right:178.6px;top:538px;font-size:14px;font-weight:bold;color:#000;transform-origin:100% 50%;transform:rotate(-45deg);">Q4-2007</div>
<div class="t" style="right:140.3px;top:538px;font-size:14px;font-weight:bold;color:#000;transform-origin:100% 50%;transform:rotate(-45deg);">Q1-2008</div>
<div class="t" style="right:102.1px;top:538px;font-size:14px;font-weight:bold;color:#000;transform-origin:100% 50%;transform:rotate(-45deg);">Q2-2008</div>
<div class="t" style="right:63.8px;top:538px;font-size:14px;font-weight:bold;color:#000;transform-origin:100% 50%;transform:rotate(-45deg);">Q3-2008</div>
<div class="t" style="right:25.6px;top:538px;font-size:14px;font-weight:bold;color:#000;transform-origin:100% 50%;transform:rotate(-45deg);">Q4-2008</div>
<svg class="ab" style="left:0;top:0" width="1200" height="826"><line x1="1038.8" y1="662.9" x2="1005.3" y2="681.5" stroke="#bcbcbc" stroke-width="1"/><line x1="1038.8" y1="662.9" x2="1035.7" y2="703" stroke="#bcbcbc" stroke-width="1"/><line x1="1005.3" y1="681.5" x2="1035.7" y2="703" stroke="#303030" stroke-width="1.4"/><line x1="1035.7" y1="703" x2="1075.5" y2="709.8" stroke="#bcbcbc" stroke-width="1"/><line x1="1005.3" y1="681.5" x2="995.6" y2="722.4" stroke="#bcbcbc" stroke-width="1"/><line x1="1035.7" y1="703" x2="995.6" y2="722.4" stroke="#bcbcbc" stroke-width="1"/><line x1="965.4" y1="698" x2="995.6" y2="722.4" stroke="#bcbcbc" stroke-width="1"/><line x1="965.4" y1="698" x2="961.4" y2="739.7" stroke="#bcbcbc" stroke-width="1"/><line x1="950.7" y1="717.7" x2="995.6" y2="722.4" stroke="#303030" stroke-width="1.4"/><line x1="961.4" y1="739.7" x2="995.6" y2="722.4" stroke="#bcbcbc" stroke-width="1"/><line x1="961.4" y1="739.7" x2="989.3" y2="763" stroke="#bcbcbc" stroke-width="1"/><line x1="995.6" y1="722.4" x2="989.3" y2="763" stroke="#bcbcbc" stroke-width="1"/><line x1="995.6" y1="722.4" x2="1025.5" y2="750.4" stroke="#303030" stroke-width="1.4"/><rect x="1020.0" y="670.4" width="4" height="1.3" fill="#7a7a7a" opacity="0.7"/><rect x="1035.2" y="681.2" width="4" height="1.3" fill="#7a7a7a" opacity="0.7"/><rect x="1018.5" y="690.5" width="4" height="1.3" fill="#7a7a7a" opacity="0.7"/><rect x="1053.6" y="704.6" width="4" height="1.3" fill="#7a7a7a" opacity="0.7"/><rect x="998.5" y="700.2" width="4" height="1.3" fill="#7a7a7a" opacity="0.7"/><rect x="1013.7" y="710.9" width="4" height="1.3" fill="#7a7a7a" opacity="0.7"/><rect x="978.5" y="708.4" width="4" height="1.3" fill="#7a7a7a" opacity="0.7"/><rect x="961.4" y="717.1" width="4" height="1.3" fill="#7a7a7a" opacity="0.7"/><rect x="971.2" y="718.2" width="4" height="1.3" fill="#7a7a7a" opacity="0.7"/><rect x="976.5" y="729.2" width="4" height="1.3" fill="#7a7a7a" opacity="0.7"/><rect x="973.3" y="749.6" width="4" height="1.3" fill="#7a7a7a" opacity="0.7"/><rect x="990.5" y="740.9" width="4" height="1.3" fill="#7a7a7a" opacity="0.7"/><rect x="1008.5" y="734.6" width="4" height="1.3" fill="#7a7a7a" opacity="0.7"/><circle cx="1038.8" cy="662.9" r="2.8" fill="#8fb8e6" stroke="#b0b8c0" stroke-width="0.7"/><rect x="1035.3" y="661.3" width="7" height="1.2" fill="#6a6a6a" opacity="0.55"/><circle cx="1005.3" cy="681.5" r="2.8" fill="#8fb8e6" stroke="#b0b8c0" stroke-width="0.7"/><rect x="1001.8" y="679.9" width="7" height="1.2" fill="#6a6a6a" opacity="0.55"/><circle cx="1035.7" cy="703" r="2.8" fill="#8fb8e6" stroke="#b0b8c0" stroke-width="0.7"/><rect x="1032.2" y="701.4" width="7" height="1.2" fill="#6a6a6a" opacity="0.55"/><circle cx="1075.5" cy="709.8" r="2.8" fill="#8fb8e6" stroke="#b0b8c0" stroke-width="0.7"/><rect x="1072.0" y="708.2" width="7" height="1.2" fill="#6a6a6a" opacity="0.55"/><circle cx="965.4" cy="698" r="2.8" fill="#8fb8e6" stroke="#b0b8c0" stroke-width="0.7"/><rect x="961.9" y="696.4" width="7" height="1.2" fill="#6a6a6a" opacity="0.55"/><circle cx="950.7" cy="717.7" r="2.8" fill="#8fb8e6" stroke="#b0b8c0" stroke-width="0.7"/><rect x="947.2" y="716.1" width="7" height="1.2" fill="#6a6a6a" opacity="0.55"/><circle cx="995.6" cy="722.4" r="2.8" fill="#8fb8e6" stroke="#b0b8c0" stroke-width="0.7"/><rect x="992.1" y="720.8" width="7" height="1.2" fill="#6a6a6a" opacity="0.55"/><circle cx="961.4" cy="739.7" r="2.8" fill="#8fb8e6" stroke="#b0b8c0" stroke-width="0.7"/><rect x="957.9" y="738.1" width="7" height="1.2" fill="#6a6a6a" opacity="0.55"/><circle cx="1025.5" cy="750.4" r="2.8" fill="#8fb8e6" stroke="#b0b8c0" stroke-width="0.7"/><rect x="1022.0" y="748.8" width="7" height="1.2" fill="#6a6a6a" opacity="0.55"/><circle cx="989.3" cy="763" r="2.8" fill="#8fb8e6" stroke="#b0b8c0" stroke-width="0.7"/><rect x="985.8" y="761.4" width="7" height="1.2" fill="#6a6a6a" opacity="0.55"/></svg>
<svg class="ab" style="left:13px;top:34px;" width="26" height="23" viewBox="0 0 26 23">
<defs><linearGradient id="mb" x1="0" y1="0" x2="0" y2="1"><stop offset="0" stop-color="#7cc8f8"/><stop offset="1" stop-color="#2a8ad8"/></linearGradient>
<linearGradient id="md" x1="0" y1="0" x2="1" y2="1"><stop offset="0" stop-color="#fbfbfb"/><stop offset="1" stop-color="#d8d8d8"/></linearGradient></defs>
<rect x="0.5" y="0.5" width="8" height="4.5" rx="1" fill="url(#mb)" stroke="#2f7cc8"/>
<rect x="0.5" y="5.5" width="15" height="17" fill="url(#md)" stroke="#8c8c8c"/>
<g stroke="#9a9a9a" stroke-width="0.8"><line x1="3" y1="8.5" x2="12" y2="8.5"/><line x1="3" y1="11.5" x2="12" y2="11.5"/><line x1="2" y1="14" x2="14" y2="14" stroke="#777"/><line x1="3" y1="17" x2="10" y2="17"/><line x1="3" y1="20" x2="12" y2="20"/></g>
<polygon points="17,12 24,12 20.5,16" fill="#000"/></svg>
<svg class="ab" style="left:48px;top:42px;" width="18" height="18" viewBox="0 0 18 18"><polygon points="10.10,7.50 8.56,8.77 8.75,10.75 6.77,10.56 5.50,12.10 4.23,10.56 2.25,10.75 2.44,8.77 0.90,7.50 2.44,6.23 2.25,4.25 4.23,4.44 5.50,2.90 6.77,4.44 8.75,4.25 8.56,6.23" fill="#f8d898" stroke="#e8b868" stroke-width="0.6"/><circle cx="5.5" cy="7.5" r="1.61" fill="#c9def6"/><polygon points="16.60,5.50 15.06,6.77 15.25,8.75 13.27,8.56 12.00,10.10 10.73,8.56 8.75,8.75 8.94,6.77 7.40,5.50 8.94,4.23 8.75,2.25 10.73,2.44 12.00,0.90 13.27,2.44 15.25,2.25 15.06,4.23" fill="#f8d898" stroke="#e8b868" stroke-width="0.6"/><circle cx="12" cy="5.5" r="1.61" fill="#c9def6"/><polygon points="13.90,12.50 12.43,13.71 12.61,15.61 10.71,15.43 9.50,16.90 8.29,15.43 6.39,15.61 6.57,13.71 5.10,12.50 6.57,11.29 6.39,9.39 8.29,9.57 9.50,8.10 10.71,9.57 12.61,9.39 12.43,11.29" fill="#f8d898" stroke="#e8b868" stroke-width="0.6"/><circle cx="9.5" cy="12.5" r="1.54" fill="#c9def6"/></svg>
<svg class="ab" style="left:153px;top:43px;" width="17" height="17" viewBox="0 0 17 17"><defs><linearGradient id="og" x1="0" y1="0" x2="0" y2="1"><stop offset="0" stop-color="#f2f2f2"/><stop offset="1" stop-color="#c4c8c8"/></linearGradient></defs>
<rect x="0.5" y="0.5" width="15.5" height="15.5" rx="2" fill="url(#og)" stroke="#8e9494"/>
<rect x="4" y="2.5" width="1.6" height="12" fill="#333"/><rect x="10.5" y="2.5" width="1.6" height="12" fill="#333"/>
<rect x="2" y="4.5" width="5.5" height="2.5" fill="#9aa0a0" stroke="#666" stroke-width="0.5"/><rect x="8.5" y="8.5" width="5.5" height="2.5" fill="#9aa0a0" stroke="#666" stroke-width="0.5"/></svg>
<svg class="ab" style="left:21px;top:76px;" width="17" height="17" viewBox="0 0 17 17"><defs><linearGradient id="og" x1="0" y1="0" x2="0" y2="1"><stop offset="0" stop-color="#f2f2f2"/><stop offset="1" stop-color="#c4c8c8"/></linearGradient></defs>
<rect x="0.5" y="0.5" width="15.5" height="15.5" rx="2" fill="url(#og)" stroke="#8e9494"/>
<rect x="4" y="2.5" width="1.6" height="12" fill="#333"/><rect x="10.5" y="2.5" width="1.6" height="12" fill="#333"/>
<rect x="2" y="4.5" width="5.5" height="2.5" fill="#9aa0a0" stroke="#666" stroke-width="0.5"/><rect x="8.5" y="8.5" width="5.5" height="2.5" fill="#9aa0a0" stroke="#666" stroke-width="0.5"/></svg>
<svg class="ab" style="left:236px;top:43px;" width="16" height="16" viewBox="0 0 16 16"><g fill="#3a88d4"><rect x="1" y="1" width="13" height="2.6" rx="1.3"/><rect x="1" y="5" width="10" height="2.6" rx="1.3"/><rect x="1" y="9" width="8" height="2.6" rx="1.3"/><rect x="1" y="13" width="6" height="2.6" rx="1.3"/></g></svg>
<svg class="ab" style="left:342px;top:41px;" width="18" height="20" viewBox="0 0 18 20"><g stroke="#5c5c8c" stroke-width="1" fill="none"><line x1="6" y1="8.5" x2="9" y2="13.5"/><line x1="8" y1="6" x2="12" y2="10"/><line x1="5" y1="9" x2="10" y2="15"/><line x1="9" y1="5" x2="14" y2="11"/></g>
<circle cx="4.5" cy="5" r="3.3" fill="#eef4f8" stroke="#5c5c8c"/><circle cx="12.5" cy="14.5" r="3.3" fill="#eef4f8" stroke="#5c5c8c"/>
<circle cx="5" cy="6" r="1.2" fill="#a8d0e0"/><circle cx="13" cy="15.5" r="1.2" fill="#a8d0e0"/></svg>
<svg class="ab" style="left:458px;top:45px;" width="17" height="14" viewBox="0 0 17 14"><rect x="0.5" y="0.5" width="15.5" height="13" fill="#f4ead0" stroke="#b87818"/>
<rect x="0.5" y="0.5" width="15.5" height="3" fill="#f4a820"/><rect x="0.5" y="0.5" width="3" height="13" fill="#f4a820"/>
<rect x="1" y="1" width="2" height="2" fill="#fff"/>
<g fill="#fff"><rect x="4.5" y="4.5" width="3" height="2"/><rect x="8.5" y="4.5" width="3" height="2"/><rect x="12.5" y="4.5" width="3" height="2"/><rect x="4.5" y="7.5" width="3" height="2"/><rect x="8.5" y="7.5" width="3" height="2"/><rect x="12.5" y="7.5" width="3" height="2"/><rect x="4.5" y="10.5" width="3" height="2"/><rect x="8.5" y="10.5" width="3" height="2"/><rect x="12.5" y="10.5" width="3" height="2"/></g></svg>
<svg class="ab" style="left:546px;top:45px;" width="17" height="14" viewBox="0 0 17 14"><rect x="0" y="1" width="5" height="1" fill="#555"/><rect x="6" y="1" width="4" height="1" fill="#e00"/><rect x="11" y="1" width="5" height="1" fill="#333"/><rect x="0" y="3" width="5" height="1" fill="#555"/><rect x="6" y="3" width="4" height="1" fill="#e00"/><rect x="11" y="3" width="5" height="1" fill="#333"/><rect x="0" y="5" width="5" height="1" fill="#555"/><rect x="6" y="5" width="4" height="1" fill="#e00"/><rect x="11" y="5" width="5" height="1" fill="#333"/><rect x="0" y="7" width="5" height="1" fill="#555"/><rect x="6" y="7" width="4" height="1" fill="#e00"/><rect x="11" y="7" width="5" height="1" fill="#333"/><rect x="0" y="9" width="5" height="1" fill="#555"/><rect x="6" y="9" width="4" height="1" fill="#e00"/><rect x="11" y="9" width="5" height="1" fill="#333"/><rect x="0" y="11" width="5" height="1" fill="#555"/><rect x="6" y="11" width="4" height="1" fill="#e00"/><rect x="11" y="11" width="5" height="1" fill="#333"/></svg>
<svg class="ab" style="left:695px;top:43px;" width="18" height="17" viewBox="0 0 18 17"><polygon points="9,1 17,10 9,14" fill="#2a8ad8"/><polygon points="9,1 13,11 9,14" fill="#6cb8f0"/>
<rect x="1" y="2" width="8" height="8" fill="#d42020"/><polygon points="1,2 4,0 11,0 9,2" fill="#f04040"/>
<circle cx="6" cy="12" r="4.5" fill="#20a020"/><circle cx="5" cy="10.5" r="1.8" fill="#70e070"/></svg>
<svg class="ab" style="left:790px;top:42px;" width="18" height="18" viewBox="0 0 18 18"><path d="M1.5 10.5 C5 8.5 8 6.5 12.5 6 L12.5 3.5 L16.5 6.8 L12.5 10 L12.5 8 C9 8.3 5 10.5 2 12 Z" fill="#f04a2a" stroke="#7a3a30" stroke-width="0.7"/>
<path d="M2 12 C6 12.5 9 13 12.5 13.2 L12.5 11.2 L16.5 14.2 L12.5 17 L12.5 15.2 C8.5 15 5 13.8 1.8 12.8 Z" fill="#20a8f0" stroke="#2070b0" stroke-width="0.6"/></svg>
<svg class="ab" style="left:1163px;top:37px;" width="26" height="17" viewBox="0 0 26 17"><defs><radialGradient id="hg" cx="0.4" cy="0.35" r="0.7"><stop offset="0" stop-color="#6a9ae8"/><stop offset="1" stop-color="#1a3c9c"/></radialGradient></defs>
<circle cx="8.5" cy="8.5" r="7.5" fill="#e0e0e0" stroke="#888" stroke-width="1"/><circle cx="8.5" cy="8.5" r="6" fill="url(#hg)"/>
<text x="8.5" y="13" font-family="Liberation Sans" font-weight="bold" font-size="11" fill="#fff" text-anchor="middle">?</text>
<polygon points="19,8 24,8 21.5,11" fill="#000"/></svg>
<svg class="ab" style="left:100px;top:74px;" width="24" height="22" viewBox="0 0 24 22"><g fill="none" stroke-width="1.5" stroke-linejoin="miter">
<path d="M3 3.5 H5.6 V5.3 H3 M5.6 4.4 H13.7 M3 7.6 H8.3 V9.3 H3 M8.3 8.5 H13.7 V4.4" stroke="#0000f0"/>
<path d="M3 11.6 H6.3 V13.3 H3 M6.3 12.4 H16.5 V16.3 H12.3 M3 15.5 H12.3 V17.5 H3" stroke="#900000"/>
<path d="M13.9 6.4 H18.5 V14.5 H16.6" stroke="#808080" stroke-width="1.3"/></g></svg>
<svg class="ab" style="left:208px;top:75px;" width="19" height="19" viewBox="0 0 19 19"><rect x="7.5" y="1.5" width="5" height="6" fill="#fff4dc" stroke="#c8a860"/><rect x="8.5" y="4" width="3" height="0.8" fill="#aaa"/>
<g stroke="#7a7a7a" stroke-width="1"><line x1="10" y1="7.5" x2="10" y2="11"/><line x1="3" y1="11" x2="17" y2="11"/><line x1="3" y1="11" x2="3" y2="14"/><line x1="10" y1="11" x2="10" y2="14"/><line x1="17" y1="11" x2="17" y2="14"/></g>
<g fill="#1010c8"><circle cx="3" cy="16" r="2.2"/><circle cx="10" cy="16" r="2.2"/><circle cx="17" cy="16" r="2.2"/></g></svg>
<svg class="ab" style="left:336px;top:76px;" width="18" height="18" viewBox="0 0 18 18"><circle cx="7" cy="5" r="4" fill="#2020f0"/><circle cx="2.5" cy="6.5" r="1.8" fill="#2020f0"/>
<circle cx="4.5" cy="11.5" r="4.2" fill="#c01010"/><circle cx="9.5" cy="14.5" r="1.6" fill="#c01010"/>
<ellipse cx="12.5" cy="10.5" rx="3.3" ry="4" fill="#108010"/><circle cx="14" cy="4.5" r="1.6" fill="#108010"/></svg>
<svg class="ab" style="left:476px;top:76px;" width="18" height="17" viewBox="0 0 18 17"><g stroke="#9a8a8a" stroke-width="0.9"><line x1="2" y1="2" x2="15" y2="15"/><line x1="15" y1="3" x2="2" y2="14"/></g>
<g fill="none" stroke="#6a9ab8" stroke-width="0.8"><circle cx="2" cy="2" r="1.3"/><circle cx="12" cy="4" r="1.2"/><circle cx="15" cy="3" r="1.2"/><circle cx="2.5" cy="13" r="1.3"/><circle cx="5" cy="15" r="1.2"/><circle cx="15" cy="14" r="1.2"/><circle cx="8" cy="12" r="1"/></g>
<circle cx="8.5" cy="8.5" r="1.8" fill="#e01010"/></svg>
<svg class="ab" style="left:586px;top:76px;" width="17" height="18" viewBox="0 0 17 18"><g fill="#2a8a80"><rect x="1" y="1" width="7" height="1.6"/><rect x="2" y="4" width="6" height="1.6"/><rect x="3" y="7" width="5" height="1.6"/><rect x="4" y="10" width="4" height="1.6"/><rect x="5" y="13" width="3" height="1.6"/></g>
<g fill="#e05020"><rect x="9" y="1" width="7" height="1.6"/><rect x="9" y="4" width="6" height="1.6"/><rect x="9" y="7" width="5" height="1.6"/><rect x="9" y="10" width="3" height="1.6"/><rect x="9" y="13" width="4" height="1.6"/></g>
<rect x="7.7" y="0" width="1.4" height="16" fill="#111"/><rect x="0" y="15.5" width="17" height="1.2" fill="#111"/>
<g fill="#111"><rect x="1" y="16.5" width="1" height="1"/><rect x="4" y="16.5" width="1" height="1"/><rect x="7" y="16.5" width="1" height="1"/><rect x="10" y="16.5" width="1" height="1"/><rect x="13" y="16.5" width="1" height="1"/></g></svg>
<svg class="ab" style="left:329px;top:111px;" width="22" height="22" viewBox="0 0 22 22"><g shape-rendering="crispEdges"><rect x="1" y="3" width="8" height="2" fill="#e01010"/><rect x="2" y="7" width="7" height="2" fill="#108010"/><rect x="6" y="10" width="3" height="2" fill="#2020e0"/><rect x="4" y="13" width="5" height="2" fill="#20a0a0"/><rect x="2" y="16" width="7" height="2" fill="#20e020"/><rect x="3" y="19" width="6" height="2" fill="#f020f0"/>
<rect x="9" y="2" width="1" height="20" fill="#111"/></g>
<g fill="none" stroke="#1010a0" stroke-width="1"><path d="M10 3.5 H13 V7.5 H10 M13 5.5 H15 V12.5 H13 M10 10.5 H13 V14.5 H10 M10 16.5 H13 V20.5 H10 M13 18.5 H15 V14 M15 9 H18 V16.5 H15"/></g></svg>
<svg class="ab" style="left:357px;top:113px;" width="18" height="18" viewBox="0 0 18 18"><defs><radialGradient id="zg" cx="0.35" cy="0.35" r="0.7"><stop offset="0" stop-color="#f0f0f0"/><stop offset="1" stop-color="#a0a0a0"/></radialGradient></defs>
<line x1="11.5" y1="11.5" x2="16.5" y2="16.5" stroke="#101848" stroke-width="3.4"/><line x1="12.5" y1="12.5" x2="16" y2="16" stroke="#d8c820" stroke-width="1"/>
<circle cx="7.5" cy="7.5" r="6.3" fill="url(#zg)" stroke="#111" stroke-width="1.4"/>
<line x1="4.5" y1="7.5" x2="10.5" y2="7.5" stroke="#111" stroke-width="1.4"/><line x1="7.5" y1="4.5" x2="7.5" y2="10.5" stroke="#111" stroke-width="1.4"/></svg>
<svg class="ab" style="left:383px;top:113px;" width="18" height="18" viewBox="0 0 18 18"><defs><radialGradient id="zg" cx="0.35" cy="0.35" r="0.7"><stop offset="0" stop-color="#f0f0f0"/><stop offset="1" stop-color="#a0a0a0"/></radialGradient></defs>
<line x1="11.5" y1="11.5" x2="16.5" y2="16.5" stroke="#101848" stroke-width="3.4"/><line x1="12.5" y1="12.5" x2="16" y2="16" stroke="#d8c820" stroke-width="1"/>
<circle cx="7.5" cy="7.5" r="6.3" fill="url(#zg)" stroke="#111" stroke-width="1.4"/>
<line x1="4.5" y1="7.5" x2="10.5" y2="7.5" stroke="#111" stroke-width="1.4"/></svg>
<svg class="ab" style="left:410px;top:112px;" width="21" height="21" viewBox="0 0 21 21"><rect x="8" y="13" width="1.2" height="1.2" fill="#f4f000"/><rect x="8" y="15" width="1.2" height="1.2" fill="#f4f000"/><rect x="8" y="17" width="1.2" height="1.2" fill="#f4f000"/><rect x="8" y="19" width="1.2" height="1.2" fill="#f4f000"/><rect x="10" y="11" width="1.2" height="1.2" fill="#f4f000"/><rect x="10" y="13" width="1.2" height="1.2" fill="#f4f000"/><rect x="10" y="15" width="1.2" height="1.2" fill="#f4f000"/><rect x="10" y="17" width="1.2" height="1.2" fill="#f4f000"/><rect x="10" y="19" width="1.2" height="1.2" fill="#f4f000"/><rect x="12" y="9" width="1.2" height="1.2" fill="#f4f000"/><rect x="12" y="11" width="1.2" height="1.2" fill="#f4f000"/><rect x="12" y="13" width="1.2" height="1.2" fill="#f4f000"/><rect x="12" y="15" width="1.2" height="1.2" fill="#f4f000"/><rect x="12" y="17" width="1.2" height="1.2" fill="#f4f000"/><rect x="12" y="19" width="1.2" height="1.2" fill="#f4f000"/><rect x="14" y="9" width="1.2" height="1.2" fill="#f4f000"/><rect x="14" y="11" width="1.2" height="1.2" fill="#f4f000"/><rect x="14" y="13" width="1.2" height="1.2" fill="#f4f000"/><rect x="14" y="15" width="1.2" height="1.2" fill="#f4f000"/><rect x="14" y="17" width="1.2" height="1.2" fill="#f4f000"/><rect x="14" y="19" width="1.2" height="1.2" fill="#f4f000"/><rect x="16" y="9" width="1.2" height="1.2" fill="#f4f000"/><rect x="16" y="11" width="1.2" height="1.2" fill="#f4f000"/><rect x="16" y="13" width="1.2" height="1.2" fill="#f4f000"/><rect x="16" y="15" width="1.2" height="1.2" fill="#f4f000"/><rect x="16" y="17" width="1.2" height="1.2" fill="#f4f000"/><rect x="16" y="19" width="1.2" height="1.2" fill="#f4f000"/><rect x="18" y="9" width="1.2" height="1.2" fill="#f4f000"/><rect x="18" y="11" width="1.2" height="1.2" fill="#f4f000"/><rect x="18" y="13" width="1.2" height="1.2" fill="#f4f000"/><rect x="18" y="15" width="1.2" height="1.2" fill="#f4f000"/><rect x="18" y="17" width="1.2" height="1.2" fill="#f4f000"/><rect x="18" y="19" width="1.2" height="1.2" fill="#f4f000"/>
<path d="M0.5 3 L3 0.5 L10 6.5 L6.5 10 Z" fill="#f4f4f4" stroke="#111" stroke-width="1"/>
<path d="M6 2 L8 4" stroke="#e01010" stroke-width="1.3"/>
<path d="M6.5 10 L10 6.5 L14.5 7.5 L7.5 14.5 Z" fill="#f01010" stroke="#111" stroke-width="0.9"/>
<path d="M6.5 10 L8.5 8 L10 12.5 L7.5 14.5 Z" fill="#900000"/></svg>
<svg class="ab" style="left:1080px;top:116px;" width="17" height="14" viewBox="0 0 17 14"><rect x="0.5" y="0.5" width="15.5" height="13" fill="#c08a40" stroke="#b06a10"/>
<rect x="0.5" y="0.5" width="15.5" height="3" fill="#f8a820"/><rect x="0.5" y="0.5" width="3" height="13" fill="#f8a820"/>
<g fill="#fff"><rect x="4.5" y="4.5" width="3" height="2"/><rect x="8.5" y="4.5" width="3" height="2"/><rect x="12.5" y="4.5" width="3" height="2"/><rect x="4.5" y="7.5" width="3" height="2"/><rect x="8.5" y="7.5" width="3" height="2"/><rect x="12.5" y="7.5" width="3" height="2"/><rect x="4.5" y="10.5" width="3" height="2"/><rect x="8.5" y="10.5" width="3" height="2"/><rect x="12.5" y="10.5" width="3" height="2"/></g></svg>
<svg class="ab" style="left:1107px;top:113px;" width="16" height="18" viewBox="0 0 16 18"><g stroke="#888" stroke-width="1" fill="none"><path d="M4 5 V15 H9 M4 9 H9"/></g>
<path d="M0.5 1 H4 L5 2 H9 V5.5 H0.5 Z" fill="#f8c030" stroke="#c89010" stroke-width="0.6"/>
<path d="M8.5 7 H11 L12 8 H15 V11 H8.5 Z" fill="#f8c030" stroke="#c89010" stroke-width="0.6"/>
<path d="M8.5 13 H11 L12 14 H15 V17 H8.5 Z" fill="#f8c030" stroke="#c89010" stroke-width="0.6"/></svg>
<svg class="ab" style="left:1134px;top:113px;" width="17" height="18" viewBox="0 0 17 18"><path d="M1 6 L8 9 L15 6 V16 L8 18 L1 16 Z" fill="#1a6060" stroke="#000" stroke-width="0.8"/>
<path d="M2 5 L8 8 L8 16 L2 14 Z" fill="#f4ead8" stroke="#333" stroke-width="0.6"/><path d="M14 5 L8 8 L8 16 L14 14 Z" fill="#e8dcc4" stroke="#333" stroke-width="0.6"/>
<path d="M10 0 H13 V4 H15.5 L11.5 8.5 L7.5 4 H10 Z" fill="#2a70e0"/></svg>
<svg class="ab" style="left:1162px;top:115px;" width="15" height="15" viewBox="0 0 15 15"><rect x="0.5" y="0.5" width="14" height="14" rx="1.5" fill="#555" stroke="#333"/>
<rect x="3" y="1" width="9" height="5" fill="#e8eef4"/><rect x="3" y="1" width="9" height="1.5" fill="#5aa0e0"/>
<rect x="3.5" y="9" width="8" height="5.5" fill="#888"/><rect x="5" y="10" width="2" height="3.5" fill="#333"/></svg>
<div class="ab" style="left:123px;top:117px;width:0;height:0;border-left:4px solid transparent;border-right:4px solid transparent;border-bottom:4px solid #000;"></div>
<div class="ab" style="left:123px;top:125px;width:0;height:0;border-left:4px solid transparent;border-right:4px solid transparent;border-top:4px solid #000;"></div>
<svg class="ab" style="left:829px;top:151px;" width="20" height="18" viewBox="0 0 20 18"><g shape-rendering="crispEdges"><rect x="1" y="0" width="1" height="17" fill="#111"/><rect x="1" y="16" width="18" height="1" fill="#111"/>
<rect x="3" y="11" width="2" height="5" fill="#f01010"/><rect x="6" y="8" width="2" height="8" fill="#1010f0"/><rect x="9" y="4" width="2" height="12" fill="#108010"/><rect x="12" y="6" width="2" height="10" fill="#10f0f0"/><rect x="15" y="13" width="2" height="3" fill="#700000"/>
<g fill="#333"><rect x="0" y="2" width="1" height="1"/><rect x="0" y="5" width="1" height="1"/><rect x="0" y="8" width="1" height="1"/><rect x="0" y="11" width="1" height="1"/><rect x="0" y="14" width="1" height="1"/><rect x="3" y="17" width="1" height="1"/><rect x="6" y="17" width="1" height="1"/><rect x="9" y="17" width="1" height="1"/><rect x="12" y="17" width="1" height="1"/><rect x="15" y="17" width="1" height="1"/></g></g></svg>
<svg class="ab" style="left:859px;top:152px;" width="19" height="19" viewBox="0 0 19 19"><g shape-rendering="crispEdges"><rect x="1" y="0" width="1" height="18" fill="#111"/><rect x="1" y="17" width="17" height="1" fill="#111"/>
<rect x="2" y="2" width="3" height="2" fill="#700000"/><rect x="2" y="5" width="10" height="2" fill="#10f0f0"/><rect x="2" y="8" width="12" height="2" fill="#108010"/><rect x="2" y="11" width="8" height="2" fill="#1010f0"/><rect x="2" y="14" width="5" height="2" fill="#f01010"/>
<g fill="#333"><rect x="0" y="2" width="1" height="1"/><rect x="0" y="5" width="1" height="1"/><rect x="0" y="8" width="1" height="1"/><rect x="0" y="11" width="1" height="1"/><rect x="0" y="14" width="1" height="1"/><rect x="3" y="18" width="1" height="1"/><rect x="6" y="18" width="1" height="1"/><rect x="9" y="18" width="1" height="1"/><rect x="12" y="18" width="1" height="1"/><rect x="15" y="18" width="1" height="1"/></g></g></svg>
<svg class="ab" style="left:887px;top:153px;" width="17" height="15" viewBox="0 0 17 15"><g shape-rendering="crispEdges"><rect x="0" y="0" width="17" height="1" fill="#888"/><rect x="0" y="4" width="17" height="1" fill="#888"/><rect x="0" y="8" width="17" height="1" fill="#888"/><rect x="0" y="12" width="17" height="1" fill="#888"/>
<rect x="2" y="0" width="1" height="14" fill="#111"/><rect x="2" y="13" width="15" height="1" fill="#111"/>
<g fill="#555"><rect x="3" y="14" width="1" height="1"/><rect x="7" y="14" width="1" height="1"/><rect x="11" y="14" width="1" height="1"/><rect x="15" y="14" width="1" height="1"/></g></g>
<polyline points="3,7 6,2 9,8 12,11 16,2" fill="none" stroke="#1010f0" stroke-width="1.2"/>
<polyline points="3,11 6,7 9,9 12,5 16,5" fill="none" stroke="#f01010" stroke-width="1.2"/></svg>
<svg class="ab" style="left:829px;top:400px;" width="20" height="18" viewBox="0 0 20 18"><g shape-rendering="crispEdges"><rect x="1" y="0" width="1" height="17" fill="#111"/><rect x="1" y="16" width="18" height="1" fill="#111"/>
<rect x="3" y="11" width="2" height="5" fill="#f01010"/><rect x="6" y="8" width="2" height="8" fill="#1010f0"/><rect x="9" y="4" width="2" height="12" fill="#108010"/><rect x="12" y="6" width="2" height="10" fill="#10f0f0"/><rect x="15" y="13" width="2" height="3" fill="#700000"/>
<g fill="#333"><rect x="0" y="2" width="1" height="1"/><rect x="0" y="5" width="1" height="1"/><rect x="0" y="8" width="1" height="1"/><rect x="0" y="11" width="1" height="1"/><rect x="0" y="14" width="1" height="1"/><rect x="3" y="17" width="1" height="1"/><rect x="6" y="17" width="1" height="1"/><rect x="9" y="17" width="1" height="1"/><rect x="12" y="17" width="1" height="1"/><rect x="15" y="17" width="1" height="1"/></g></g></svg>
<svg class="ab" style="left:859px;top:401px;" width="19" height="19" viewBox="0 0 19 19"><g shape-rendering="crispEdges"><rect x="1" y="0" width="1" height="18" fill="#111"/><rect x="1" y="17" width="17" height="1" fill="#111"/>
<rect x="2" y="2" width="3" height="2" fill="#700000"/><rect x="2" y="5" width="10" height="2" fill="#10f0f0"/><rect x="2" y="8" width="12" height="2" fill="#108010"/><rect x="2" y="11" width="8" height="2" fill="#1010f0"/><rect x="2" y="14" width="5" height="2" fill="#f01010"/>
<g fill="#333"><rect x="0" y="2" width="1" height="1"/><rect x="0" y="5" width="1" height="1"/><rect x="0" y="8" width="1" height="1"/><rect x="0" y="11" width="1" height="1"/><rect x="0" y="14" width="1" height="1"/><rect x="3" y="18" width="1" height="1"/><rect x="6" y="18" width="1" height="1"/><rect x="9" y="18" width="1" height="1"/><rect x="12" y="18" width="1" height="1"/><rect x="15" y="18" width="1" height="1"/></g></g></svg>
<svg class="ab" style="left:887px;top:402px;" width="17" height="15" viewBox="0 0 17 15"><g shape-rendering="crispEdges"><rect x="0" y="0" width="17" height="1" fill="#888"/><rect x="0" y="4" width="17" height="1" fill="#888"/><rect x="0" y="8" width="17" height="1" fill="#888"/><rect x="0" y="12" width="17" height="1" fill="#888"/>
<rect x="2" y="0" width="1" height="14" fill="#111"/><rect x="2" y="13" width="15" height="1" fill="#111"/>
<g fill="#555"><rect x="3" y="14" width="1" height="1"/><rect x="7" y="14" width="1" height="1"/><rect x="11" y="14" width="1" height="1"/><rect x="15" y="14" width="1" height="1"/></g></g>
<polyline points="3,7 6,2 9,8 12,11 16,2" fill="none" stroke="#1010f0" stroke-width="1.2"/>
<polyline points="3,11 6,7 9,9 12,5 16,5" fill="none" stroke="#f01010" stroke-width="1.2"/></svg>
<svg class="ab" style="left:828px;top:611px;" width="22" height="22" viewBox="0 0 22 22"><line x1="8.3" y1="3.5" x2="8.3" y2="8.3" stroke="#333" stroke-width="1.1"/><line x1="8.3" y1="8.3" x2="13.3" y2="8.5" stroke="#333" stroke-width="1.1"/><line x1="13.3" y1="8.5" x2="18.5" y2="5.5" stroke="#333" stroke-width="1.1"/><line x1="18.5" y1="5.5" x2="18.5" y2="11.6" stroke="#333" stroke-width="1.1"/><line x1="8.3" y1="8.3" x2="4" y2="11.8" stroke="#333" stroke-width="1.1"/><line x1="4" y1="11.8" x2="6.5" y2="18.5" stroke="#333" stroke-width="1.1"/><line x1="6.5" y1="18.5" x2="11.5" y2="14.5" stroke="#333" stroke-width="1.1"/><line x1="11.5" y1="14.5" x2="16.5" y2="18.5" stroke="#333" stroke-width="1.1"/><line x1="16.5" y1="18.5" x2="18.5" y2="11.6" stroke="#333" stroke-width="1.1"/><line x1="13.3" y1="8.5" x2="11.5" y2="14.5" stroke="#333" stroke-width="1.1"/><line x1="4" y1="11.8" x2="11.5" y2="14.5" stroke="#333" stroke-width="1.1"/><circle cx="8.3" cy="3.5" r="1.9" fill="#2a64a4"/><circle cx="8.3" cy="8.3" r="1.9" fill="#2a64a4"/><circle cx="13.3" cy="8.5" r="1.9" fill="#2a64a4"/><circle cx="18.5" cy="5.5" r="1.9" fill="#2a64a4"/><circle cx="18.5" cy="11.6" r="1.9" fill="#2a64a4"/><circle cx="4" cy="11.8" r="1.9" fill="#2a64a4"/><circle cx="11.5" cy="14.5" r="1.9" fill="#2a64a4"/><circle cx="6.5" cy="18.5" r="1.9" fill="#2a64a4"/><circle cx="16.5" cy="18.5" r="1.9" fill="#2a64a4"/></svg>
<svg class="ab" style="left:852px;top:607px;" width="22" height="22" viewBox="0 0 22 22"><line x1="9" y1="8" x2="14" y2="13" stroke="#777" stroke-width="0.7"/><line x1="9" y1="15.5" x2="14" y2="13" stroke="#777" stroke-width="0.7"/><line x1="14" y1="13" x2="18" y2="19.5" stroke="#777" stroke-width="0.7"/><line x1="18" y1="19.5" x2="23" y2="15.5" stroke="#777" stroke-width="0.7"/><line x1="23" y1="15.5" x2="23" y2="22.5" stroke="#777" stroke-width="0.7"/><line x1="18" y1="19.5" x2="23" y2="22.5" stroke="#777" stroke-width="0.7"/><line x1="9" y1="8" x2="9" y2="15.5" stroke="#777" stroke-width="0.7"/><circle cx="9" cy="8" r="1.9" fill="#2a64a4"/><circle cx="9" cy="15.5" r="1.9" fill="#2a64a4"/><circle cx="14" cy="13" r="1.9" fill="#2a64a4"/><circle cx="23" cy="15.5" r="1.9" fill="#2a64a4"/><circle cx="18" cy="19.5" r="1.9" fill="#2a64a4"/><circle cx="23" cy="22.5" r="1.9" fill="#2a64a4"/></svg>
<svg class="ab" style="left:887px;top:614px;" width="22" height="22" viewBox="0 0 22 22"><circle cx="13.8" cy="8.0" r="1.7" fill="#2a64a4"/><circle cx="12.101219330881975" cy="12.101219330881975" r="1.7" fill="#2a64a4"/><circle cx="8.0" cy="13.8" r="1.7" fill="#2a64a4"/><circle cx="3.8987806691180245" cy="12.101219330881975" r="1.7" fill="#2a64a4"/><circle cx="2.2" cy="8.0" r="1.7" fill="#2a64a4"/><circle cx="3.8987806691180236" cy="3.8987806691180245" r="1.7" fill="#2a64a4"/><circle cx="7.999999999999999" cy="2.2" r="1.7" fill="#2a64a4"/><circle cx="12.101219330881975" cy="3.8987806691180236" r="1.7" fill="#2a64a4"/></svg>
<div class="ab" style="left:929px;top:620px;width:84px;height:1px;background:#4a78b0"></div>
<div class="ab" style="left:1012px;top:613px;width:9px;height:17px;border:1px solid #3a6aa8;border-radius:5px;background:linear-gradient(90deg,#d8e6f6,#b8d0ee);"></div>
<div class="ab" style="left:1015px;top:617px;width:3px;height:9px;border:1px solid #3a6aa8;border-radius:2px;"></div>
<svg class="ab" style="left:1026px;top:617px;" width="11" height="11" viewBox="0 0 11 11"><path d="M3.5 0.5 H6.5 V3.5 H9.5 V6.5 H6.5 V9.5 H3.5 V6.5 H0.5 V3.5 H3.5 Z" fill="#fff" stroke="#3a6aa8" stroke-width="1"/></svg>
<svg class="ab" style="left:1046px;top:613px;" width="18" height="17" viewBox="0 0 18 17"><path d="M0 1 L9 3 L6 5 L17 6 L12 9 L14 10 L8 16 L9 11 L6 11 L7 8 L3 6 L5 4 Z" fill="#8a8a8a"/></svg>
<div class="ab" style="left:912px;top:607px;width:1px;height:30px;background:#909090"></div>
<div class="ab" style="left:918px;top:607px;width:1px;height:30px;background:#909090"></div>
<div class="ab" style="left:1078px;top:607px;width:1px;height:30px;background:#909090"></div>
<svg class="ab" style="left:1088px;top:612px;" width="17" height="17" viewBox="0 0 17 17"><rect x="3.5" y="3.5" width="10" height="10" fill="#dfe8f4" stroke="#203a80" stroke-width="1"/>
<path d="M5 12 L8 8 L11 11 L13 9 V13 H5 Z" fill="#8aa8c8"/><circle cx="10.5" cy="6.5" r="2" fill="#f07020"/>
<g stroke="#1a3aa0" stroke-width="1"><line x1="0.5" y1="0.5" x2="4" y2="4"/><line x1="16.5" y1="0.5" x2="13" y2="4"/><line x1="0.5" y1="16.5" x2="4" y2="13"/><line x1="16.5" y1="16.5" x2="13" y2="13"/></g></svg>
<svg class="ab" style="left:1116px;top:613px;" width="17" height="17" viewBox="0 0 17 17"><line x1="11" y1="11" x2="15" y2="15" stroke="#555" stroke-width="2.6"/>
<circle cx="7" cy="7" r="6" fill="#f4f8fc" stroke="#7890a8" stroke-width="1.6"/><circle cx="7" cy="7" r="4.6" fill="#fff" stroke="#b8c8d8" stroke-width="0.6"/>
<line x1="4.5" y1="7" x2="9.5" y2="7" stroke="#2050c0" stroke-width="1.3"/><line x1="7" y1="4.5" x2="7" y2="9.5" stroke="#2050c0" stroke-width="1.3"/></svg>
<svg class="ab" style="left:1144px;top:613px;" width="17" height="17" viewBox="0 0 17 17"><line x1="11" y1="11" x2="15" y2="15" stroke="#555" stroke-width="2.6"/>
<circle cx="7" cy="7" r="6" fill="#f4f8fc" stroke="#7890a8" stroke-width="1.6"/><circle cx="7" cy="7" r="4.6" fill="#fff" stroke="#b8c8d8" stroke-width="0.6"/>
<line x1="4.5" y1="7" x2="9.5" y2="7" stroke="#2050c0" stroke-width="1.3"/></svg>
</body></html>
